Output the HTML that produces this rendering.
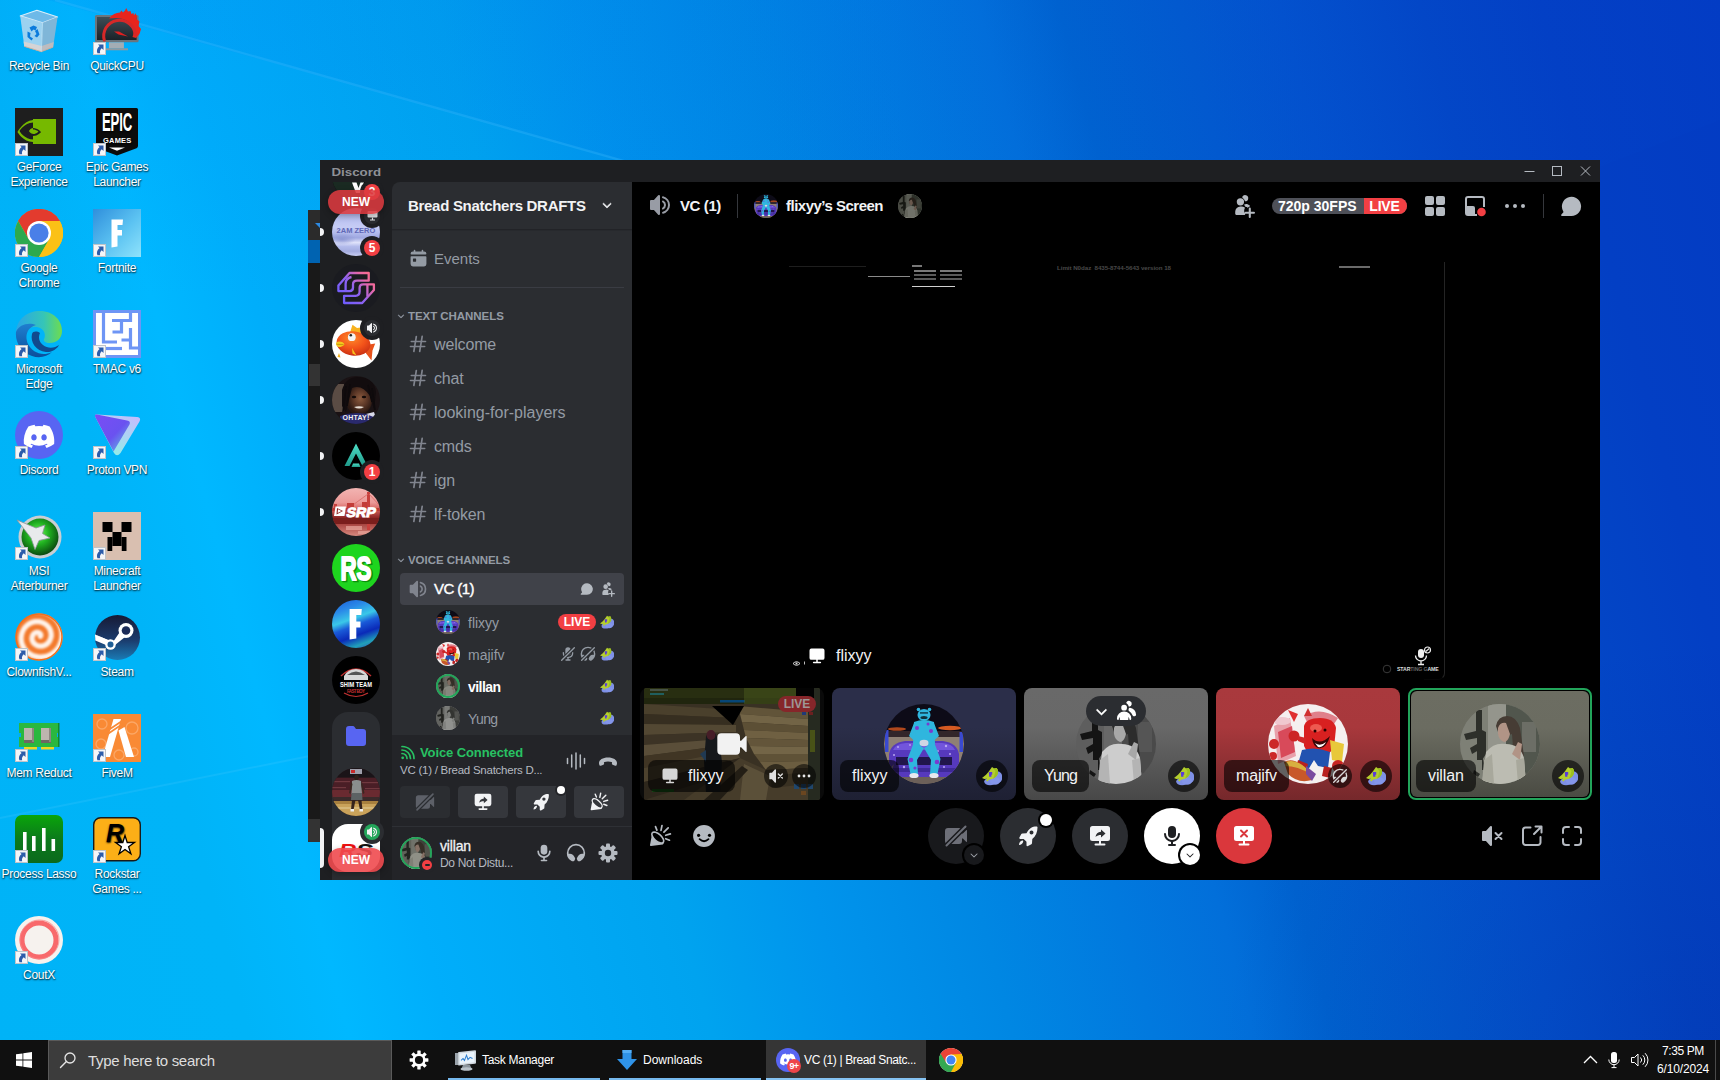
<!DOCTYPE html>
<html>
<head>
<meta charset="utf-8">
<title>Desktop</title>
<style>
*{box-sizing:border-box;margin:0;padding:0}
html,body{width:1720px;height:1080px;overflow:hidden}
body{position:relative;font-family:"Liberation Sans",sans-serif;background:#0078d7;color:#fff}
.abs{position:absolute}
#wall{position:absolute;left:0;top:0;width:1720px;height:1080px;
background:
radial-gradient(ellipse 500px 400px at 1720px 1040px,rgba(2,30,140,.22),rgba(2,30,140,0) 100%),
linear-gradient(75deg,#00b3f7 0%,#00b4f8 13%,#00b8ff 18%,#00aefb 23%,#00a8f4 30%,#00a3ef 36%,#0094ec 43%,#0087e3 51%,#0179de 58%,#026fda 63%,#0062cf 67%,#0259ce 73%,#0351cd 78%,#0346c6 85%,#033fc4 91%,#033bc3 100%);}
#wall .w1{position:absolute;left:0;top:0;width:1720px;height:1080px;background:linear-gradient(100deg,rgba(0,90,230,.09),rgba(0,90,230,.03) 70%);clip-path:polygon(48px 0,1720px 0,1720px 120px,1200px 322px)}
#wall .w2{position:absolute;left:0;top:0;width:900px;height:300px;background:linear-gradient(to bottom,rgba(0,120,235,.10),rgba(0,120,235,0))}
/* desktop icons */
.di{position:absolute;width:78px;text-align:center;font-size:12px;line-height:15px;color:#fff;text-shadow:0 1px 2px rgba(0,0,0,.7),1px 1px 1px rgba(0,0,0,.35);letter-spacing:-.3px}
.di .ic{position:relative;width:48px;height:48px;margin:0 auto 4px auto}
.di .ic svg{position:absolute;left:0;top:0}
.sc{position:absolute;left:0;bottom:0;width:12px;height:12px;background:#f4f6f8;border:1px solid #c8ccd0}
/* taskbar */
#tb{position:absolute;left:0;top:1040px;width:1720px;height:40px;background:#101010}
#tb .search{position:absolute;left:48px;top:0;width:344px;height:40px;background:#3c3c3c;border:1px solid #5a5a5a;border-bottom:none}
#tb .t{position:absolute;top:0;height:40px;font-size:12px;line-height:38px;color:#fff;white-space:nowrap}
#tb .ul{position:absolute;bottom:0;height:2px;background:#76b9ed}
/* discord */
#dw{position:absolute;left:320px;top:160px;width:1280px;height:720px;background:#1e1f22;overflow:hidden}
.sv{width:48px;height:48px}
.newp{width:56px;height:24px;border-radius:12px;font-size:12px;font-weight:bold;line-height:24px;text-align:center;color:#fff;box-shadow:0 2px 6px rgba(0,0,0,.3)}
#side{position:absolute;left:72px;top:22px;width:240px;height:698px;background:#2b2d31;border-top-left-radius:8px;overflow:hidden}
#main{position:absolute;left:312px;top:22px;width:968px;height:698px;background:#000}
</style>
</head>
<body>
<div id="wall"><div class="w2"></div><div class="w1"></div><svg class="abs" style="left:0;top:0" width="1720" height="1080"><path d="M55 0 1200 324" stroke="#48c0ff" stroke-opacity=".26" stroke-width="2.400" fill="none"/><path d="M0 818 330 752" stroke="#6fd8ff" stroke-opacity=".14" stroke-width="2" fill="none"/></svg></div>
<!--BEHIND-->
<div class="abs" style="left:308px;top:210px;width:14px;height:632px;background:#191919"></div>
<div class="abs" style="left:308px;top:210px;width:14px;height:30px;background:#2b2b2b"></div>
<div class="abs" style="left:308px;top:240px;width:14px;height:23px;background:#0063b1"></div>
<div class="abs" style="left:309px;top:364px;width:13px;height:22px;background:#333"></div>
<div class="abs" style="left:308px;top:819px;width:14px;height:23px;background:#333"></div>
<svg class="abs" style="left:315px;top:223px" width="6" height="6"><path d="M0 0H5V5z" fill="#2d89e0"/></svg>
<!--/BEHIND-->
<!--ICONS-->
<div class="di" style="left:0px;top:7px"><div class="ic"><svg width="48" height="48" viewBox="0 0 48 48"><path d="M5.200 8.900 21.900 3.200 42.600 10.100 27.600 15.800z" fill="#6db9e8" stroke="#d9eefa" stroke-width="1.100" stroke-linejoin="round"/>
<path d="M5.200 8.900 27.600 15.800 26.300 44.700 9.300 39.400z" fill="#a8d4ef" opacity=".93"/><path d="M27.600 15.800 42.600 10.100 38.100 40.200 26.300 44.700z" fill="#86b6d6" opacity=".95"/>
<path d="M8.600 34.500 26.600 39 26.300 44.700 9.300 39.400z" fill="#d4d4d6"/><path d="M26.600 39 38.800 35 38.100 40.200 26.300 44.700z" fill="#bcbcc0"/>
<path d="M9.300 39.400 26.300 44.700 38.100 40.200" fill="none" stroke="#c9a890" stroke-width=".8"/><path d="M27.600 15.800 26.300 44.700" stroke="#cfe6f5" stroke-width=".7"/>
<g fill="#0b7bdc"><path d="M14.500 20.500 18.500 18.500 22 20 20.500 23.500 18.500 22.500 16.500 24.500z"/><path d="M22.500 22 24.500 27.500 22 30.500 19.500 29 21.500 27 20 24z"/><path d="M12.500 24.500 15.500 26 15 29.500 18 31.500 16.500 33.500 12.500 30z"/></g></svg></div>Recycle Bin</div>
<div class="di" style="left:78px;top:7px"><div class="ic"><svg width="48" height="48" viewBox="0 0 48 48"><defs><linearGradient id="qm" x1="0" y1="0" x2="0" y2="1"><stop offset="0" stop-color="#3f4d56"/><stop offset="1" stop-color="#1a2228"/></linearGradient></defs>
<rect x="2" y="8" width="43.600" height="27.300" rx="1.500" fill="#6a757d"/><rect x="4" y="10" width="39.600" height="23" fill="url(#qm)"/><rect x="15.900" y="35.300" width="15" height="6.200" fill="#a3adb4"/><rect x="13" y="41.300" width="22" height="2" fill="#8f999f"/>
<path d="M16 11.500C19 7.500 23 5.500 27 5.500L28.500 3.500 30 5.500 32 3.500 33.200 1 35 4.500 37.500 4 38.500 7 40.500 6 41 8.500 42.500 6.200 44 9.500 43.500 12 46.500 14.500 45.500 19 48 22 46.500 27 43 31 39.500 30C43 22 38 14.500 30 12 25 10.500 20 11 16 11.500z" fill="#e8251d"/>
<path d="M11.500 34A15.800 15.800 0 1 1 42.300 29" fill="none" stroke="#d62828" stroke-width="3"/><path d="M11 27.500a16 16 0 0 0 .800 7" stroke="#d62828" stroke-width="1.200" fill="none"/>
<path d="M21 24.500 26 24.500 35 29.500 25.500 27.500z" fill="#e02020"/></svg><svg style="left:0;top:35px" width="13" height="13" viewBox="0 0 13 13"><rect x=".5" y=".5" width="12" height="12" fill="#f5f6f8" stroke="#c0c4c9"/><path d="M5 2.500H10.500V8L8.700 6.200C7 7.800 6.600 9.300 7.200 11.200H4.400C3.300 8.600 4.200 6 6.600 4.100z" fill="#2c5caa"/></svg></div>QuickCPU</div>
<div class="di" style="left:0px;top:108px"><div class="ic"><svg width="48" height="48" viewBox="0 0 48 48"><rect width="48" height="48" fill="#1e1e1e"/><rect x="18" y="11" width="23" height="25" fill="#76b900"/>
<path d="M18 14.500C9 15 4.500 23 4.500 23S9 31.500 19 31.500 32 25.500 36 23.500C32 27 28 34 18 34 8 34 2.500 24 2.500 24S8 13 18 12z" fill="#76b900"/>
<path d="M18 17.500C13 18 10 23 10 23s3 5 8 5c5 0 8-4 8-4s-3-4-8-4v-2.500z" fill="#1e1e1e"/><path d="M18 20c-2.500.300-4 3-4 3s1.500 3 4.500 3 5-2.500 5-2.500S21 21.500 18 21.500z" fill="#76b900"/><path d="M18 11v25" stroke="#1e1e1e" stroke-width="0"/></svg><svg style="left:0;top:35px" width="13" height="13" viewBox="0 0 13 13"><rect x=".5" y=".5" width="12" height="12" fill="#f5f6f8" stroke="#c0c4c9"/><path d="M5 2.500H10.500V8L8.700 6.200C7 7.800 6.600 9.300 7.200 11.200H4.400C3.300 8.600 4.200 6 6.600 4.100z" fill="#2c5caa"/></svg></div>GeForce<br>Experience</div>
<div class="di" style="left:78px;top:108px"><div class="ic"><svg width="48" height="48" viewBox="0 0 48 48"><path d="M3 1.500Q3 0 4.500 0H43.500Q45 0 45 1.500V38Q45 39.500 43.500 40.200L24 47.500 4.500 40.200Q3 39.500 3 38z" fill="#0b0b0b"/>
<text x="24" y="24" font-family="Liberation Sans" font-weight="bold" font-size="21" fill="#fff" text-anchor="middle" textLength="30" lengthAdjust="spacingAndGlyphs" transform="translate(24 24) scale(1 1.250) translate(-24 -24.500)">EPIC</text>
<text x="24" y="35" font-family="Liberation Sans" font-weight="bold" font-size="7.500" fill="#fff" text-anchor="middle" textLength="28">GAMES</text><path d="M16 39.500h16l-8 3.300z" fill="#fff"/></svg><svg style="left:0;top:35px" width="13" height="13" viewBox="0 0 13 13"><rect x=".5" y=".5" width="12" height="12" fill="#f5f6f8" stroke="#c0c4c9"/><path d="M5 2.500H10.500V8L8.700 6.200C7 7.800 6.600 9.300 7.200 11.200H4.400C3.300 8.600 4.200 6 6.600 4.100z" fill="#2c5caa"/></svg></div>Epic Games<br>Launcher</div>
<div class="di" style="left:0px;top:209px"><div class="ic"><svg width="48" height="48" viewBox="0 0 48 48"><circle cx="24" cy="24" r="24" fill="#fbc116"/>
<path d="M24 24 3.200 12A24 24 0 0 1 44.800 12z" fill="#e33b2e"/><path d="M24 12H44.800A24 24 0 0 0 3.200 12L13.600 30z" fill="#e33b2e"/>
<path d="M13.600 30 3.200 12A24 24 0 0 0 24 48L34.400 30z" fill="#2da94f"/>
<path d="M34.400 30 24 48A24 24 0 0 0 44.800 12H24z" fill="#fbc116"/>
<circle cx="24" cy="24" r="12" fill="#fff"/><circle cx="24" cy="24" r="9.600" fill="#4a7fe8"/></svg><svg style="left:0;top:35px" width="13" height="13" viewBox="0 0 13 13"><rect x=".5" y=".5" width="12" height="12" fill="#f5f6f8" stroke="#c0c4c9"/><path d="M5 2.500H10.500V8L8.700 6.200C7 7.800 6.600 9.300 7.200 11.200H4.400C3.300 8.600 4.200 6 6.600 4.100z" fill="#2c5caa"/></svg></div>Google<br>Chrome</div>
<div class="di" style="left:78px;top:209px"><div class="ic"><svg width="48" height="48" viewBox="0 0 48 48"><defs><linearGradient id="fn" x1="0" y1="0" x2="1" y2="1"><stop offset="0" stop-color="#2f8fdc"/><stop offset=".55" stop-color="#5cc3f2"/><stop offset="1" stop-color="#8fe3fb"/></linearGradient></defs><rect width="48" height="48" fill="url(#fn)"/><path d="M18.500 10.500H30L29.500 16H24.500V21H29V26.500H24.500V37.500L18.500 38.500z" fill="#fff"/></svg><svg style="left:0;top:35px" width="13" height="13" viewBox="0 0 13 13"><rect x=".5" y=".5" width="12" height="12" fill="#f5f6f8" stroke="#c0c4c9"/><path d="M5 2.500H10.500V8L8.700 6.200C7 7.800 6.600 9.300 7.200 11.200H4.400C3.300 8.600 4.200 6 6.600 4.100z" fill="#2c5caa"/></svg></div>Fortnite</div>
<div class="di" style="left:0px;top:310px"><div class="ic"><svg width="48" height="48" viewBox="0 0 48 48"><defs><linearGradient id="e1" x1="0" y1="0" x2="1" y2="0"><stop offset="0" stop-color="#2aa5e8"/><stop offset=".6" stop-color="#35c5b8"/><stop offset="1" stop-color="#6fdc4e"/></linearGradient><linearGradient id="e2" x1="0" y1="0" x2="0" y2="1"><stop offset="0" stop-color="#1f7fd0"/><stop offset="1" stop-color="#0c4f9c"/></linearGradient></defs>
<path d="M1 22C2 9 12 1 25 1 38 1 47 10 47 21 47 29 41 33 35 33 30 33 28 31 29 29 31 26 30 18 22 17 12 16 4 22 1 22z" fill="url(#e1)"/>
<path d="M1 22C4 14 14 12 21 15 13 17 9 25 13 34 17 42 27 47 37 42 32 47 24 48.500 17 46 6 42 0 32 1 22z" fill="url(#e2)"/>
<path d="M17 24C15 32 21 41 31 42 37 42.500 42 39 44 35 40 38 33 39 28 35 24 32 23 27 25 23 22 21 18 21 17 24z" fill="#114a8e"/></svg><svg style="left:0;top:35px" width="13" height="13" viewBox="0 0 13 13"><rect x=".5" y=".5" width="12" height="12" fill="#f5f6f8" stroke="#c0c4c9"/><path d="M5 2.500H10.500V8L8.700 6.200C7 7.800 6.600 9.300 7.200 11.200H4.400C3.300 8.600 4.200 6 6.600 4.100z" fill="#2c5caa"/></svg></div>Microsoft<br>Edge</div>
<div class="di" style="left:78px;top:310px"><div class="ic"><svg width="48" height="48" viewBox="0 0 48 48"><rect width="48" height="48" fill="#6e95f5"/><rect x="3" y="3" width="42" height="42" fill="#fff"/>
<g fill="none" stroke="#6e95f5" stroke-width="3.200"><path d="M10.500 3V32H24"/><path d="M19 10.500H37.500V3M28.500 10.500V22H19.500"/><path d="M37.500 18V38H45M28.500 30H37"/><path d="M3 38.500H29"/></g></svg><svg style="left:0;top:35px" width="13" height="13" viewBox="0 0 13 13"><rect x=".5" y=".5" width="12" height="12" fill="#f5f6f8" stroke="#c0c4c9"/><path d="M5 2.500H10.500V8L8.700 6.200C7 7.800 6.600 9.300 7.200 11.200H4.400C3.300 8.600 4.200 6 6.600 4.100z" fill="#2c5caa"/></svg></div>TMAC v6</div>
<div class="di" style="left:0px;top:411px"><div class="ic"><svg width="48" height="48" viewBox="0 0 48 48"><circle cx="24" cy="24" r="24" fill="#5865f2"/><g transform="translate(8.500 12.500) scale(1.940)"><path fill="#fff" d="M13.500 1.600A12 12 0 0 0 10.300.6l-.4.8a11 11 0 0 0-3.800 0L5.700.6a12 12 0 0 0-3.200 1C.5 4.700-.1 7.700.2 10.600a12 12 0 0 0 3.900 2l.8-1.300a8 8 0 0 1-1.300-.6l.3-.3a8.800 8.800 0 0 0 8.200 0l.3.300c-.4.200-.8.500-1.300.6l.8 1.300a12 12 0 0 0 3.900-2c.4-3.400-.6-6.300-2.300-9zM5.400 8.800c-.8 0-1.400-.7-1.400-1.600s.6-1.600 1.400-1.600 1.400.7 1.400 1.600-.6 1.600-1.400 1.600zm5.200 0c-.8 0-1.400-.7-1.400-1.600s.6-1.600 1.400-1.600 1.400.7 1.400 1.600-.6 1.600-1.400 1.600z"/></g></svg><svg style="left:0;top:35px" width="13" height="13" viewBox="0 0 13 13"><rect x=".5" y=".5" width="12" height="12" fill="#f5f6f8" stroke="#c0c4c9"/><path d="M5 2.500H10.500V8L8.700 6.200C7 7.800 6.600 9.300 7.200 11.200H4.400C3.300 8.600 4.200 6 6.600 4.100z" fill="#2c5caa"/></svg></div>Discord</div>
<div class="di" style="left:78px;top:411px"><div class="ic"><svg width="48" height="48" viewBox="0 0 48 48"><defs><linearGradient id="pv" x1="0" y1="0" x2="1" y2="1"><stop offset="0" stop-color="#7a4df5"/><stop offset=".55" stop-color="#6a52f0"/><stop offset="1" stop-color="#5fd0e0"/></linearGradient><linearGradient id="pv2" x1="1" y1="0" x2=".3" y2="1"><stop offset="0" stop-color="#c9b8ff"/><stop offset="1" stop-color="#8ff0e6"/></linearGradient></defs>
<path d="M4 3.500Q1 3 2.500 6.500L21 42Q24 46.500 27.500 42L46.500 10.500Q48.500 6.500 44 6z" fill="url(#pv2)"/><path d="M4 3.500Q1 3 2.500 6.500L20.500 40.500 36.500 13.500Q38 10 34 9.500z" fill="url(#pv)"/></svg><svg style="left:0;top:35px" width="13" height="13" viewBox="0 0 13 13"><rect x=".5" y=".5" width="12" height="12" fill="#f5f6f8" stroke="#c0c4c9"/><path d="M5 2.500H10.500V8L8.700 6.200C7 7.800 6.600 9.300 7.200 11.200H4.400C3.300 8.600 4.200 6 6.600 4.100z" fill="#2c5caa"/></svg></div>Proton VPN</div>
<div class="di" style="left:0px;top:512px"><div class="ic"><svg width="48" height="48" viewBox="0 0 48 48"><defs><radialGradient id="ms" cx=".45" cy=".4" r=".6"><stop offset="0" stop-color="#6cff5a"/><stop offset=".5" stop-color="#1fae1f"/><stop offset="1" stop-color="#0b4a10"/></radialGradient></defs>
<circle cx="25" cy="25" r="21.500" fill="#c9ced2"/><circle cx="25" cy="25" r="18.500" fill="url(#ms)"/><path d="M2 8 21 16 30 13 27.500 21.500 35 26 24 28.500 20 37.500 16 26z" fill="#e8eaec" stroke="#8d9499" stroke-width=".8"/></svg><svg style="left:0;top:35px" width="13" height="13" viewBox="0 0 13 13"><rect x=".5" y=".5" width="12" height="12" fill="#f5f6f8" stroke="#c0c4c9"/><path d="M5 2.500H10.500V8L8.700 6.200C7 7.800 6.600 9.300 7.200 11.200H4.400C3.300 8.600 4.200 6 6.600 4.100z" fill="#2c5caa"/></svg></div>MSI<br>Afterburner</div>
<div class="di" style="left:78px;top:512px"><div class="ic"><svg width="48" height="48" viewBox="0 0 48 48"><rect width="48" height="48" fill="#d9bfb0"/><g fill="#000"><rect x="9.500" y="10" width="10" height="10"/><rect x="28.500" y="10" width="10" height="10"/><rect x="19.500" y="20" width="9" height="14"/><rect x="14.500" y="25" width="5" height="14"/><rect x="28.500" y="25" width="5" height="14"/></g><rect x="19.500" y="34" width="9" height="5" fill="#d9bfb0"/></svg><svg style="left:0;top:35px" width="13" height="13" viewBox="0 0 13 13"><rect x=".5" y=".5" width="12" height="12" fill="#f5f6f8" stroke="#c0c4c9"/><path d="M5 2.500H10.500V8L8.700 6.200C7 7.800 6.600 9.300 7.200 11.200H4.400C3.300 8.600 4.200 6 6.600 4.100z" fill="#2c5caa"/></svg></div>Minecraft<br>Launcher</div>
<div class="di" style="left:0px;top:613px"><div class="ic"><svg width="48" height="48" viewBox="0 0 48 48"><defs><filter id="cfb" x="-10%" y="-10%" width="120%" height="120%"><feGaussianBlur stdDeviation="1.1"/></filter><clipPath id="cfc"><circle cx="24" cy="24" r="23.500"/></clipPath></defs><circle cx="24" cy="24" r="23.500" fill="#f37a2d"/><g clip-path="url(#cfc)"><path d="M25.4 23.3 L25.6 23.0 L25.7 22.7 L25.8 22.3 L25.7 21.8 L25.6 21.4 L25.4 20.9 L25.0 20.5 L24.6 20.1 L24.1 19.7 L23.5 19.5 L22.8 19.4 L22.1 19.3 L21.3 19.4 L20.6 19.7 L19.8 20.0 L19.1 20.5 L18.4 21.2 L17.9 22.0 L17.5 22.8 L17.2 23.8 L17.0 24.9 L17.0 26.0 L17.2 27.1 L17.6 28.2 L18.2 29.3 L18.9 30.3 L19.9 31.2 L21.0 31.9 L22.2 32.6 L23.5 33.0 L25.0 33.2 L26.5 33.2 L28.0 32.9 L29.5 32.4 L30.9 31.7 L32.2 30.7 L33.4 29.5 L34.4 28.2 L35.2 26.6 L35.8 24.9 L36.2 23.1 L36.2 21.2 L35.9 19.3 L35.4 17.4 L34.6 15.6 L33.4 13.9 L32.0 12.4 L30.4 11.1 L28.5 10.0 L26.5 9.2 L24.3 8.7 L22.1 8.6 L19.8 8.7 L17.5 9.3 L15.3 10.2 L13.2 11.4 L11.3 13.0 L9.6 14.9 L8.3 17.0 L7.2 19.3 L6.5 21.8 L6.1 24.5 L6.2 27.2 L6.7 29.9 L7.6 32.5 L8.9 35.0 L10.6 37.3 L12.6 39.3 L15.0 41.1 L17.6 42.5 L20.5 43.4 L23.5 44.0 L26.6 44.1 L29.7 43.7 L32.7 42.9 L35.6 41.6 L38.4 39.8 L40.8 37.6 L43.0 35.1 L44.7 32.2 L46.0 29.1 L46.8 25.7 L47.1 22.2 L46.9 18.7 L46.2 15.3 L44.9 11.9 L43.2 8.7 L40.9 5.8 L38.2 3.3 L35.1 1.1 L31.7 -0.6 L28.1 -1.7 L24.2 -2.3 L20.3 -2.3" fill="none" stroke="#fff3ea" stroke-width="5.200" stroke-linecap="round" filter="url(#cfb)"/></g><circle cx="24" cy="24" r="23" fill="none" stroke="#f0701f" stroke-width="1.500"/></svg><svg style="left:0;top:35px" width="13" height="13" viewBox="0 0 13 13"><rect x=".5" y=".5" width="12" height="12" fill="#f5f6f8" stroke="#c0c4c9"/><path d="M5 2.500H10.500V8L8.700 6.200C7 7.800 6.600 9.300 7.200 11.200H4.400C3.300 8.600 4.200 6 6.600 4.100z" fill="#2c5caa"/></svg></div>ClownfishV...</div>
<div class="di" style="left:78px;top:613px"><div class="ic"><svg width="48" height="48" viewBox="0 0 48 48"><defs><linearGradient id="st" x1="0" y1="0" x2="0" y2="1"><stop offset="0" stop-color="#171a35"/><stop offset=".55" stop-color="#1b3a6b"/><stop offset="1" stop-color="#1a7bb5"/></linearGradient></defs><circle cx="24.500" cy="24.500" r="22.500" fill="url(#st)"/>
<circle cx="33" cy="17.500" r="7.500" fill="#fff"/><circle cx="33" cy="17.500" r="4.300" fill="#1b2b58"/><path d="M2 21.500 20 29 26.500 19.500 32 24 22 32z" fill="#fff"/><circle cx="17.500" cy="31.500" r="5.300" fill="#fff"/><circle cx="17.500" cy="31.500" r="3" fill="#1d5e96"/><path d="M2 21.500 15 27 13 32 2.300 27.500z" fill="#fff"/></svg><svg style="left:0;top:35px" width="13" height="13" viewBox="0 0 13 13"><rect x=".5" y=".5" width="12" height="12" fill="#f5f6f8" stroke="#c0c4c9"/><path d="M5 2.500H10.500V8L8.700 6.200C7 7.800 6.600 9.300 7.200 11.200H4.400C3.300 8.600 4.200 6 6.600 4.100z" fill="#2c5caa"/></svg></div>Steam</div>
<div class="di" style="left:0px;top:714px"><div class="ic"><svg width="48" height="48" viewBox="0 0 48 48"><rect x="4" y="9" width="40" height="24" fill="#2ab83f"/><rect x="4" y="19" width="2" height="4" fill="#00adef"/><rect x="42" y="19" width="2" height="4" fill="#00adef"/><rect x="43" y="9" width="1.500" height="24" fill="#148a2b"/>
<rect x="9" y="14" width="10" height="14" fill="#bdb5ae"/><rect x="26" y="14" width="10" height="14" fill="#bdb5ae"/><rect x="9" y="26" width="10" height="3" fill="#6e6862"/><rect x="26" y="26" width="10" height="3" fill="#6e6862"/><rect x="17" y="14" width="2" height="14" fill="#8d867f"/><rect x="34" y="14" width="2" height="14" fill="#8d867f"/>
<rect x="9" y="33" width="13" height="2.500" fill="#f0d820"/><rect x="26" y="33" width="13" height="2.500" fill="#f0d820"/></svg><svg style="left:0;top:35px" width="13" height="13" viewBox="0 0 13 13"><rect x=".5" y=".5" width="12" height="12" fill="#f5f6f8" stroke="#c0c4c9"/><path d="M5 2.500H10.500V8L8.700 6.200C7 7.800 6.600 9.300 7.200 11.200H4.400C3.300 8.600 4.200 6 6.600 4.100z" fill="#2c5caa"/></svg></div>Mem Reduct</div>
<div class="di" style="left:78px;top:714px"><div class="ic"><svg width="48" height="48" viewBox="0 0 48 48"><rect width="48" height="48" fill="#f98a35"/><g fill="none" stroke="#fba766" stroke-width="1.300"><circle cx="9" cy="10" r="5"/><circle cx="39" cy="14" r="6"/><circle cx="8" cy="30" r="5"/><circle cx="26" cy="41" r="5"/><circle cx="41" cy="38" r="4"/></g>
<path d="M20.500 5H28L17 43H9.500z" fill="#fff"/><path d="M25.500 16.500 31.500 13 41 43H33z" fill="#fff"/><path d="M15.500 16 29 7M14 20.500 29.500 10" stroke="#f98a35" stroke-width="1.600"/></svg><svg style="left:0;top:35px" width="13" height="13" viewBox="0 0 13 13"><rect x=".5" y=".5" width="12" height="12" fill="#f5f6f8" stroke="#c0c4c9"/><path d="M5 2.500H10.500V8L8.700 6.200C7 7.800 6.600 9.300 7.200 11.200H4.400C3.300 8.600 4.200 6 6.600 4.100z" fill="#2c5caa"/></svg></div>FiveM</div>
<div class="di" style="left:0px;top:815px"><div class="ic"><svg width="48" height="48" viewBox="0 0 48 48"><defs><linearGradient id="pl" x1="0" y1="0" x2="0" y2="1"><stop offset="0" stop-color="#0aa50a"/><stop offset=".5" stop-color="#0c7a1c"/><stop offset="1" stop-color="#0b6a1c"/></linearGradient></defs><rect width="48" height="48" rx="7" fill="url(#pl)"/><g fill="#fff"><rect x="8" y="17" width="3.600" height="19"/><rect x="17" y="21" width="3.600" height="15"/><rect x="27" y="13" width="3.600" height="23"/><rect x="36.500" y="24" width="3.600" height="12"/></g></svg><svg style="left:0;top:35px" width="13" height="13" viewBox="0 0 13 13"><rect x=".5" y=".5" width="12" height="12" fill="#f5f6f8" stroke="#c0c4c9"/><path d="M5 2.500H10.500V8L8.700 6.200C7 7.800 6.600 9.300 7.200 11.200H4.400C3.300 8.600 4.200 6 6.600 4.100z" fill="#2c5caa"/></svg></div>Process Lasso</div>
<div class="di" style="left:78px;top:815px"><div class="ic"><svg width="48" height="48" viewBox="0 0 48 48"><rect x=".7" y="2.700" width="46.600" height="43" rx="7" fill="#fcaf17" stroke="#1a1a1a" stroke-width="1.400"/><text x="13" y="27" font-family="Liberation Sans" font-weight="bold" font-style="italic" font-size="25" fill="#000">R</text>
<path d="M32 20.500 34.200 27.500 41.500 27.500 35.600 31.800 37.900 38.800 32 34.500 26.100 38.800 28.400 31.800 22.500 27.500 29.800 27.500z" fill="#fff" stroke="#000" stroke-width="1.300"/></svg><svg style="left:0;top:35px" width="13" height="13" viewBox="0 0 13 13"><rect x=".5" y=".5" width="12" height="12" fill="#f5f6f8" stroke="#c0c4c9"/><path d="M5 2.500H10.500V8L8.700 6.200C7 7.800 6.600 9.300 7.200 11.200H4.400C3.300 8.600 4.200 6 6.600 4.100z" fill="#2c5caa"/></svg></div>Rockstar<br>Games ...</div>
<div class="di" style="left:0px;top:916px"><div class="ic"><svg width="48" height="48" viewBox="0 0 48 48"><circle cx="24" cy="24" r="24" fill="#f6f2ee"/><circle cx="24" cy="24" r="17" fill="none" stroke="#f8696b" stroke-width="5"/><circle cx="24.500" cy="23.500" r="19.500" fill="none" stroke="#f8898a" stroke-width=".8"/></svg><svg style="left:0;top:35px" width="13" height="13" viewBox="0 0 13 13"><rect x=".5" y=".5" width="12" height="12" fill="#f5f6f8" stroke="#c0c4c9"/><path d="M5 2.500H10.500V8L8.700 6.200C7 7.800 6.600 9.300 7.200 11.200H4.400C3.300 8.600 4.200 6 6.600 4.100z" fill="#2c5caa"/></svg></div>CoutX</div>
<!--/ICONS-->
<div id="dw">
<!--TITLE-->
<div class="abs" style="left:12px;top:552px;width:48px;height:200px;border-radius:16px;background:#2b2d31"></div>
<div class="abs sv" style="left:12px;top:-8px;border-radius:50%;background:#0d0f0e;overflow:hidden"><svg width="48" height="48" viewBox="0 0 48 48"><path d="M0 30 30 30 48 46 0 48z" fill="#1a2a22"/><path d="M20 30.500H24.500L26.500 36 28.500 30.500H32L28 41H24z" fill="#fff"/></svg></div>
<div class="abs" style="left:40px;top:20px;width:24px;height:24px;border-radius:50%;background:#1e1f22"></div><div class="abs" style="left:44px;top:24px;width:16px;height:16px;border-radius:50%;background:#f23f43;font-size:12px;font-weight:bold;line-height:16px;text-align:center">3</div>
<div class="abs sv" style="left:12px;top:48px;border-radius:50%;"><div style="position:absolute;inset:0;border-radius:50%;background:radial-gradient(ellipse 14px 6px at 10px 31px,#8e98d4 0,rgba(142,152,212,0) 100%),linear-gradient(180deg,#aeb6ee 0%,#bcc3f2 25%,#c6ccf5 40%,#b2baec 52%,#9fa8e0 62%,#dfe2fa 72%,#b4bcec 80%,#a4acdf 90%,#c9cef3 100%)"></div><div style="position:absolute;left:0;top:18px;width:48px;text-align:center;font-size:7.500px;font-weight:bold;color:#6068b6;letter-spacing:0;white-space:nowrap;line-height:10px">2AM ZERO</div></div>
<div class="abs" style="left:40px;top:44px;width:24px;height:24px;border-radius:50%;background:#1e1f22"></div><div class="abs" style="left:44px;top:48px;width:16px;height:16px;border-radius:50%;background:#2b2d31"></div><svg class="abs" style="left:46.500px;top:51px" width="11" height="10" viewBox="0 0 11 10"><rect x=".5" y="0" width="10" height="6.500" rx="1" fill="#e3e5e8"/><path d="M5.500 6.500v2M3 9h5" stroke="#e3e5e8" stroke-width="1.200"/></svg>
<div class="abs" style="left:40px;top:76px;width:24px;height:24px;border-radius:50%;background:#1e1f22"></div><div class="abs" style="left:44px;top:80px;width:16px;height:16px;border-radius:50%;background:#f23f43;font-size:12px;font-weight:bold;line-height:16px;text-align:center">5</div>
<div class="abs" style="left:-4px;top:68px;width:8px;height:8px;border-radius:4px;background:#f2f3f5"></div>
<div class="abs sv" style="left:12px;top:104px;border-radius:50%;background:#1a1b20"><svg width="48" height="48" viewBox="0 0 48 48"><defs><linearGradient id="sg" gradientUnits="userSpaceOnUse" x1="8" y1="38" x2="42" y2="10"><stop offset="0" stop-color="#6a5cff"/><stop offset=".45" stop-color="#8f62f0"/><stop offset=".75" stop-color="#e868a8"/><stop offset="1" stop-color="#ff6e84"/></linearGradient></defs><g fill="none" stroke="url(#sg)" stroke-width="2.300" stroke-linejoin="round"><path d="M17.500 9H36.700V16.700H25Q21 16.700 21 20.500V23.500Q21 27.100 17.500 27.100H6.400V21.500z"/><path d="M13.600 27V20Q13.600 14 19.500 13"/><path d="M41.900 20.400H31Q27.600 20.400 27.600 24V27.500Q27.600 31.800 23.500 31.800H12.100V39H30.200L41.900 26z"/><path d="M35.400 20.400V32.500"/></g></svg></div>
<div class="abs" style="left:-4px;top:124px;width:8px;height:8px;border-radius:4px;background:#f2f3f5"></div>
<div class="abs sv" style="left:12px;top:160px;border-radius:50%;background:#fff;overflow:hidden"><svg width="48" height="48" viewBox="0 0 48 48"><defs><radialGradient id="fg" cx=".42" cy=".3" r=".75"><stop offset="0" stop-color="#ff8a2a"/><stop offset=".55" stop-color="#f2521a"/><stop offset="1" stop-color="#c42c12"/></radialGradient></defs><path d="M18 12.500 20.500 4.700 25 8 28.500 7.500 29.500 14.500z" fill="#f7b21e"/><path d="M34 25 43.200 23.500 40.500 30.500 39.500 40.500 33 32z" fill="#e8531c"/><ellipse cx="21.500" cy="23.500" rx="17" ry="12.200" transform="rotate(8 21.500 23.500)" fill="url(#fg)"/><path d="M7 33 8.500 37.500 5.500 37z" fill="#f2b01e"/><path d="M20 28 24.500 35.500 20.500 33.500z" fill="#f7c21e"/><path d="M4 24Q3.800 21.500 7 21.500 11.500 21.800 12.500 24.200 11 27 6.500 27 4.200 26.500 4 24z" fill="#f2c81e"/><path d="M4.500 24.300 11.500 24.600" stroke="#a8780a" stroke-width=".6"/><circle cx="19.800" cy="17.200" r="3.900" fill="#f4f4f4"/><circle cx="18.800" cy="15.200" r="1.300" fill="#222"/></svg></div>
<div class="abs" style="left:40px;top:156px;width:24px;height:24px;border-radius:50%;background:#1e1f22"></div><div class="abs" style="left:44px;top:160px;width:16px;height:16px;border-radius:50%;background:#2b2d31"></div><svg class="abs" style="left:46px;top:162px" width="12" height="12" viewBox="0 0 24 24"><path fill="#f2f3f5" d="M12 3a1 1 0 0 0-1-1h-.06a1 1 0 0 0-.74.320L5.920 7H3a1 1 0 0 0-1 1v8a1 1 0 0 0 1 1h2.920l4.280 4.680a1 1 0 0 0 .74.320H11a1 1 0 0 0 1-1V3ZM15.100 20.750c-.58.140-1.100-.330-1.100-.920v-.030c0-.500.370-.920.850-1.050a7 7 0 0 0 0-13.500A1.110 1.110 0 0 1 14 4.200v-.030c0-.600.520-1.060 1.100-.920a9 9 0 0 1 0 17.500Z"/><path fill="#f2f3f5" d="M15.160 16.510c-.570.280-1.160-.200-1.160-.830v-.140c0-.430.280-.800.630-1.020a3 3 0 0 0 0-5.040c-.350-.230-.630-.600-.630-1.020v-.140c0-.630.590-1.100 1.160-.830a5 5 0 0 1 0 9.020Z"/></svg>
<div class="abs" style="left:-4px;top:180px;width:8px;height:8px;border-radius:4px;background:#f2f3f5"></div>
<div class="abs sv" style="left:12px;top:216px;border-radius:50%;overflow:hidden"><svg width="48" height="48" viewBox="0 0 48 48"><defs><radialGradient id="oh" cx=".55" cy=".45" r=".5"><stop offset="0" stop-color="#8a5a3e"/><stop offset=".55" stop-color="#5a3626"/><stop offset="1" stop-color="#2a1812"/></radialGradient></defs><rect width="48" height="48" fill="#1a1214"/><rect x="0" y="8" width="12" height="28" fill="#5a4c44"/><ellipse cx="27" cy="24" rx="13" ry="15" fill="url(#oh)"/><path d="M10 14Q14 0 28 1T44 16L42 34 38 20Q30 8 20 12L14 36 10 30z" fill="#120c0e"/><g stroke="#0e0a0c" stroke-width="1.600" fill="none"><path d="M14 10 11 36M18 8 15 30M40 12 43 34M36 9 40 26"/></g><ellipse cx="22" cy="21" rx="2.200" ry="1.200" fill="#120a08"/><ellipse cx="32" cy="21" rx="2.200" ry="1.200" fill="#120a08"/><path d="M22 31Q27 29.500 32 31 27 34 22 31z" fill="#e8e0d8"/><path d="M8 40Q24 34 44 40V48H8z" fill="#2a2a6e"/><path d="M34 38 42 36 44 42z" fill="#d8d8e8"/><text x="24" y="43.500" font-family="Liberation Sans" font-weight="bold" font-size="7" fill="#f2f2f2" text-anchor="middle" letter-spacing=".2">OHTAY!</text></svg></div>
<div class="abs" style="left:-4px;top:236px;width:8px;height:8px;border-radius:4px;background:#f2f3f5"></div>
<div class="abs sv" style="left:12px;top:272px;border-radius:50%;background:#000"><svg width="48" height="48" viewBox="0 0 48 48"><defs><linearGradient id="ag" x1="0" y1="0" x2="0" y2="1"><stop offset="0" stop-color="#4fe0c8"/><stop offset="1" stop-color="#1f9a8a"/></linearGradient></defs><path d="M24 11.500 35.500 34H30.500L24 21.500 17.500 34H12.500z" fill="url(#ag)"/><path d="M21 31.500H27L28.500 35H19.500z" fill="url(#ag)"/></svg></div>
<div class="abs" style="left:40px;top:300px;width:24px;height:24px;border-radius:50%;background:#1e1f22"></div><div class="abs" style="left:44px;top:304px;width:16px;height:16px;border-radius:50%;background:#f23f43;font-size:12px;font-weight:bold;line-height:16px;text-align:center">1</div>
<div class="abs" style="left:-4px;top:292px;width:8px;height:8px;border-radius:4px;background:#f2f3f5"></div>
<div class="abs sv" style="left:12px;top:328px;border-radius:50%;overflow:hidden"><svg width="48" height="48" viewBox="0 0 48 48"><defs><linearGradient id="srp" x1="0" y1="0" x2="0" y2="1"><stop offset="0" stop-color="#f2b4b2"/><stop offset=".3" stop-color="#ec9a98"/><stop offset=".42" stop-color="#d86a68"/><stop offset=".62" stop-color="#8e2624"/><stop offset=".75" stop-color="#a84440"/><stop offset="1" stop-color="#d88a80"/></linearGradient></defs><rect width="48" height="48" fill="url(#srp)"/><path d="M35 4h3v38h-3zM2 16h3v10H2z" fill="#c8403c"/><path d="M36 6 14 22M37 6 48 18" stroke="#d86a66" stroke-width=".8"/><path d="M0 20H48V23H0z" fill="#b83a36"/><path d="M15 15h7v6h-7zM30 14h5v7h-5z" fill="#c23c38"/><path d="M0 30H48V36H0z" fill="#7a1e1c"/><path d="M14 38h16v4H14zM26 43h14v3H26z" fill="#e8a69c" opacity=".7"/><g transform="translate(0 0) skewX(-12)"><text x="34.500" y="29" font-family="Liberation Sans" font-weight="bold" font-size="13.500" fill="#fff" text-anchor="middle" stroke="#fff" stroke-width=".9" textLength="29" lengthAdjust="spacingAndGlyphs">SRP</text></g><path d="M3.500 18.500H14L12.500 28H2z" fill="#fff"/><path d="M5 20 11 23 4.500 26.500z" fill="#8e2624"/><path d="M6 21.200 9.500 23 5.700 25z" fill="#fff"/></svg></div>
<div class="abs" style="left:-4px;top:348px;width:8px;height:8px;border-radius:4px;background:#f2f3f5"></div>
<div class="abs sv" style="left:12px;top:384px;border-radius:50%;"><svg width="48" height="48" viewBox="0 0 48 48"><circle cx="24" cy="24" r="24" fill="#1ed51e"/><g transform="translate(24 24) scale(1 1.300) translate(-24 -24)"><text x="25.300" y="34.200" font-family="Liberation Sans" font-weight="bold" font-size="25" fill="#0c900c" stroke="#0c900c" stroke-width="2" text-anchor="middle" textLength="31" lengthAdjust="spacingAndGlyphs">RS</text><text x="24" y="33.200" font-family="Liberation Sans" font-weight="bold" font-size="25" fill="#fff" stroke="#fff" stroke-width="1.600" stroke-linejoin="round" text-anchor="middle" textLength="31" lengthAdjust="spacingAndGlyphs">RS</text></g></svg></div>
<div class="abs sv" style="left:12px;top:440px;border-radius:50%;"><div style="position:absolute;inset:0;border-radius:50%;background:linear-gradient(160deg,#1a5ad8 0%,#2a8ae8 22%,#3ac8e8 40%,#1a5ad8 52%,#0a2ab8 68%,#20a0b8 84%,#3a3ac0 100%)"></div><svg style="position:absolute;left:0;top:0" width="48" height="48" viewBox="0 0 48 48"><path d="M17.600 9H29.800L29.300 15H24.300V21.500H28.500V27.500H24.300V38.500L17.600 39.500z" fill="#fff"/></svg></div>
<div class="abs sv" style="left:12px;top:496px;border-radius:50%;background:#000"><svg width="48" height="48" viewBox="0 0 48 48"><path d="M9 20Q24 6 39 20" fill="none" stroke="#c03030" stroke-width="1.500"/><path d="M12 20Q16 13 24 13T36 20V24H12z" fill="#d8d8d8"/><path d="M15 19Q24 12 33 19z" fill="#555"/><rect x="6" y="25" width="36" height="6" fill="#000"/><text x="24" y="30.500" font-family="Liberation Sans" font-weight="bold" font-size="6.500" fill="#fff" text-anchor="middle" textLength="32" lengthAdjust="spacingAndGlyphs">SHIM TEAM</text><text x="24" y="36.500" font-family="Liberation Sans" font-weight="bold" font-size="4.500" fill="#c03030" text-anchor="middle" textLength="18">FAST BOY</text><path d="M12 37Q24 44 36 37" fill="none" stroke="#c03030" stroke-width="1.200"/></svg></div>
<svg class="abs" style="left:24px;top:564px" width="24" height="24" viewBox="0 0 24 24"><path fill="#5865f2" d="M2 5a3 3 0 0 1 3-3h3.930a2 2 0 0 1 1.660.900L12 5h7a3 3 0 0 1 3 3v11a3 3 0 0 1-3 3H5a3 3 0 0 1-3-3V5Z"/></svg>
<div class="abs sv" style="left:12px;top:608px;border-radius:50%;overflow:hidden"><svg width="48" height="48" viewBox="0 0 48 48"><rect width="48" height="48" fill="#2a181c"/><rect y="0" width="48" height="9" fill="#1a1418"/><rect x="18" y="1" width="12" height="5" fill="#d8d8e8" opacity=".7"/><rect x="19" y="2" width="4" height="3" fill="#c82a2a"/><path d="M0 10H48V22H0z" fill="#4a1e26"/><path d="M0 22H48V30H0z" fill="#6a2a30"/><g fill="#8a4a50" opacity=".6"><rect x="2" y="13" width="16" height="1.200"/><rect x="30" y="14" width="16" height="1.200"/><rect x="0" y="19" width="14" height="1.200"/><rect x="33" y="20" width="15" height="1.200"/></g><path d="M0 29H48V33H0z" fill="#3a2a2a"/><path d="M0 33H48V48H0z" fill="#c9a25a"/><path d="M0 33H48V36H0z" fill="#a8803e"/><path d="M4 40H44" stroke="#e8d8a8" stroke-width=".8"/><ellipse cx="24.500" cy="9.500" rx="2.300" ry="2.800" fill="#2e1e18"/><path d="M20 13Q24.500 11 29 13L30 26H19.500z" fill="#8a8e8e"/><path d="M19 14 17 25 18.500 26 20.500 16z" fill="#3a2620"/><path d="M30 14 32.500 25 31 26 29 16z" fill="#3a2620"/><path d="M19.500 25H30L30.500 32H19z" fill="#5c6264"/><path d="M20 32 19 42H21.500L23.500 32z" fill="#33221c"/><path d="M26 32 28 42H30.500L29.500 32z" fill="#33221c"/><rect x="18.500" y="41" width="3.500" height="2.500" fill="#eee"/><rect x="27.500" y="41" width="3.500" height="2.500" fill="#eee"/></svg></div>
<div class="abs sv" style="left:12px;top:664px;border-radius:16px;background:#fff;overflow:hidden"><svg width="48" height="48" viewBox="0 0 48 48"><text x="7" y="32.500" font-family="Liberation Sans" font-weight="bold" font-style="italic" font-size="19" fill="#e11" textLength="17" lengthAdjust="spacingAndGlyphs">R</text><text x="24" y="32.500" font-family="Liberation Sans" font-weight="bold" font-style="italic" font-size="19" fill="#111" textLength="17" lengthAdjust="spacingAndGlyphs">S</text></svg></div>
<div class="abs" style="left:40px;top:660px;width:24px;height:24px;border-radius:50%;background:#2b2d31"></div><div class="abs" style="left:44px;top:664px;width:16px;height:16px;border-radius:50%;background:#23a55a"></div><svg class="abs" style="left:46px;top:666px" width="12" height="12" viewBox="0 0 24 24"><path fill="#f2f3f5" d="M12 3a1 1 0 0 0-1-1h-.06a1 1 0 0 0-.74.320L5.920 7H3a1 1 0 0 0-1 1v8a1 1 0 0 0 1 1h2.920l4.280 4.680a1 1 0 0 0 .74.320H11a1 1 0 0 0 1-1V3ZM15.100 20.750c-.58.140-1.100-.330-1.100-.920v-.030c0-.500.370-.920.850-1.050a7 7 0 0 0 0-13.500A1.110 1.110 0 0 1 14 4.200v-.030c0-.600.520-1.060 1.100-.920a9 9 0 0 1 0 17.500Z"/><path fill="#f2f3f5" d="M15.160 16.510c-.570.280-1.160-.200-1.160-.830v-.140c0-.430.280-.800.630-1.020a3 3 0 0 0 0-5.040c-.350-.230-.630-.600-.630-1.020v-.140c0-.630.590-1.100 1.160-.830a5 5 0 0 1 0 9.020Z"/></svg>
<div class="abs" style="left:-4px;top:668px;width:8px;height:40px;border-radius:4px;background:#f2f3f5"></div>
<div class="abs newp" style="left:8px;top:30px;background:rgba(220,58,63,.88)">NEW</div>
<div class="abs newp" style="left:8px;top:688px;background:rgba(240,74,79,.9)">NEW</div>
<div class="abs" style="left:0;top:0;width:1280px;height:22px;background:#1e1f22"></div>
<svg class="abs" style="left:11px;top:6px" width="52" height="12" viewBox="0 0 52 12"><text x="0.500" y="10" font-family="Liberation Sans" font-weight="bold" font-size="10.500" fill="#8f9197" textLength="49.500" lengthAdjust="spacingAndGlyphs">Discord</text></svg>
<svg class="abs" style="left:1204px;top:5px" width="70" height="12" viewBox="0 0 70 12"><g fill="none" stroke="#b5bac1" stroke-width="1"><path d="M0.500 6.500h10"/><rect x="28.500" y="1.500" width="9" height="9"/><path d="M57 1.500 66 10.500M66 1.500 57 10.500"/></g></svg>
<!--/TITLE-->
<!--SERVERS-->
<div id="side">
<!--SIDE-->
<div class="abs" style="left:16px;top:13.5px;font-size:15px;line-height:20px;color:#f2f3f5;font-weight:bold;letter-spacing:-0.3px;white-space:nowrap">Bread Snatchers DRAFTS</div>
<svg class="abs" style="left:208px;top:16px" width="14" height="14" viewBox="0 0 24 24"><path stroke="#f2f3f5" stroke-width="1" fill="#f2f3f5" d="M5.300 9.300a1 1 0 0 1 1.400 0l5.300 5.290 5.300-5.300a1 1 0 1 1 1.400 1.420l-6 6a1 1 0 0 1-1.400 0l-6-6a1 1 0 0 1 0-1.400Z"/></svg>
<div class="abs" style="left:0;top:47px;width:240px;height:1px;background:#222327"></div><div class="abs" style="left:0;top:48px;width:240px;height:1px;background:#27292d"></div>
<svg class="abs" style="left:17px;top:66.5px" width="19" height="19" viewBox="0 0 24 24"><path fill="#949ba4" d="M7 1a1 1 0 0 1 1 1v.750c0 .140.110.250.250.250h7.500c.140 0 .250-.110.250-.250V2a1 1 0 1 1 2 0v.750c0 .140.110.250.250.250H19a3 3 0 0 1 3 3 1 1 0 0 1-1 1H3a1 1 0 0 1-1-1 3 3 0 0 1 3-3h.750c.140 0 .250-.110.250-.250V2a1 1 0 0 1 1-1Z"/><path fill="#949ba4" fill-rule="evenodd" d="M2 10a1 1 0 0 1 1-1h18a1 1 0 0 1 1 1v9a3 3 0 0 1-3 3H5a3 3 0 0 1-3-3v-9Zm3.500 2a.500.500 0 0 0-.500.500v3c0 .280.220.500.500.500h3a.500.500 0 0 0 .500-.500v-3a.500.500 0 0 0-.500-.500h-3Z"/></svg>
<div class="abs" style="left:42px;top:66.5px;font-size:15px;line-height:20px;color:#949ba4;font-weight:normal;letter-spacing:0px;white-space:nowrap">Events</div>
<div class="abs" style="left:8px;top:105px;width:224px;height:1px;background:#3a3c43"></div>
<svg class="abs" style="left:4px;top:128.5px" width="10" height="10" viewBox="0 0 24 24"><path stroke="#949ba4" stroke-width=".6" fill="#949ba4" d="M5.300 9.300a1 1 0 0 1 1.400 0l5.300 5.290 5.300-5.300a1 1 0 1 1 1.400 1.420l-6 6a1 1 0 0 1-1.400 0l-6-6a1 1 0 0 1 0-1.400Z"/></svg>
<div class="abs" style="left:16px;top:125.5px;font-size:11.5px;line-height:16px;color:#949ba4;font-weight:bold;letter-spacing:-0.05px;white-space:nowrap">TEXT CHANNELS</div>
<svg class="abs" style="left:16px;top:152px" width="20" height="20" viewBox="0 0 24 24"><path fill="#80848e" fill-rule="evenodd" d="M10.990 3.160A1 1 0 1 0 9 2.840L8.150 8H4a1 1 0 0 0 0 2h3.820l-.670 4H3a1 1 0 1 0 0 2h3.820l-.800 4.840a1 1 0 0 0 1.970.320L8.850 16h4.970l-.800 4.840a1 1 0 0 0 1.970.320l.860-5.160H20a1 1 0 1 0 0-2h-3.820l.670-4H21a1 1 0 1 0 0-2h-3.820l.800-4.840a1 1 0 1 0-1.970-.320L15.150 8h-4.970l.800-4.840ZM14.150 14l.670-4H9.850l-.670 4h4.970Z" clip-rule="evenodd"/></svg>
<div class="abs" style="left:42px;top:152.5px;font-size:16px;line-height:20px;color:#949ba4;font-weight:normal;letter-spacing:-0.15px;white-space:nowrap">welcome</div>
<svg class="abs" style="left:16px;top:186px" width="20" height="20" viewBox="0 0 24 24"><path fill="#80848e" fill-rule="evenodd" d="M10.990 3.160A1 1 0 1 0 9 2.840L8.150 8H4a1 1 0 0 0 0 2h3.820l-.670 4H3a1 1 0 1 0 0 2h3.820l-.800 4.840a1 1 0 0 0 1.970.320L8.850 16h4.970l-.800 4.840a1 1 0 0 0 1.970.320l.860-5.160H20a1 1 0 1 0 0-2h-3.820l.670-4H21a1 1 0 1 0 0-2h-3.820l.800-4.840a1 1 0 1 0-1.970-.320L15.150 8h-4.970l.800-4.840ZM14.150 14l.670-4H9.850l-.670 4h4.970Z" clip-rule="evenodd"/></svg>
<div class="abs" style="left:42px;top:186.5px;font-size:16px;line-height:20px;color:#949ba4;font-weight:normal;letter-spacing:-0.15px;white-space:nowrap">chat</div>
<svg class="abs" style="left:16px;top:220px" width="20" height="20" viewBox="0 0 24 24"><path fill="#80848e" fill-rule="evenodd" d="M10.990 3.160A1 1 0 1 0 9 2.840L8.150 8H4a1 1 0 0 0 0 2h3.820l-.670 4H3a1 1 0 1 0 0 2h3.820l-.800 4.840a1 1 0 0 0 1.970.320L8.850 16h4.970l-.800 4.840a1 1 0 0 0 1.970.320l.860-5.160H20a1 1 0 1 0 0-2h-3.820l.670-4H21a1 1 0 1 0 0-2h-3.820l.800-4.840a1 1 0 1 0-1.970-.320L15.150 8h-4.970l.800-4.840ZM14.150 14l.670-4H9.850l-.670 4h4.970Z" clip-rule="evenodd"/></svg>
<div class="abs" style="left:42px;top:220.5px;font-size:16px;line-height:20px;color:#949ba4;font-weight:normal;letter-spacing:0px;white-space:nowrap">looking-for-players</div>
<svg class="abs" style="left:16px;top:254px" width="20" height="20" viewBox="0 0 24 24"><path fill="#80848e" fill-rule="evenodd" d="M10.990 3.160A1 1 0 1 0 9 2.840L8.150 8H4a1 1 0 0 0 0 2h3.820l-.670 4H3a1 1 0 1 0 0 2h3.820l-.800 4.840a1 1 0 0 0 1.970.320L8.850 16h4.970l-.800 4.840a1 1 0 0 0 1.970.320l.860-5.160H20a1 1 0 1 0 0-2h-3.820l.670-4H21a1 1 0 1 0 0-2h-3.820l.800-4.840a1 1 0 1 0-1.970-.320L15.150 8h-4.970l.800-4.840ZM14.150 14l.670-4H9.850l-.670 4h4.970Z" clip-rule="evenodd"/></svg>
<div class="abs" style="left:42px;top:254.5px;font-size:16px;line-height:20px;color:#949ba4;font-weight:normal;letter-spacing:-0.15px;white-space:nowrap">cmds</div>
<svg class="abs" style="left:16px;top:288px" width="20" height="20" viewBox="0 0 24 24"><path fill="#80848e" fill-rule="evenodd" d="M10.990 3.160A1 1 0 1 0 9 2.840L8.150 8H4a1 1 0 0 0 0 2h3.820l-.670 4H3a1 1 0 1 0 0 2h3.820l-.800 4.840a1 1 0 0 0 1.970.320L8.850 16h4.970l-.800 4.840a1 1 0 0 0 1.970.320l.860-5.160H20a1 1 0 1 0 0-2h-3.820l.670-4H21a1 1 0 1 0 0-2h-3.820l.800-4.840a1 1 0 1 0-1.970-.320L15.150 8h-4.970l.800-4.840ZM14.150 14l.670-4H9.850l-.670 4h4.970Z" clip-rule="evenodd"/></svg>
<div class="abs" style="left:42px;top:288.5px;font-size:16px;line-height:20px;color:#949ba4;font-weight:normal;letter-spacing:-0.15px;white-space:nowrap">ign</div>
<svg class="abs" style="left:16px;top:322px" width="20" height="20" viewBox="0 0 24 24"><path fill="#80848e" fill-rule="evenodd" d="M10.990 3.160A1 1 0 1 0 9 2.840L8.150 8H4a1 1 0 0 0 0 2h3.820l-.670 4H3a1 1 0 1 0 0 2h3.820l-.800 4.840a1 1 0 0 0 1.970.320L8.850 16h4.970l-.800 4.840a1 1 0 0 0 1.970.320l.860-5.160H20a1 1 0 1 0 0-2h-3.820l.670-4H21a1 1 0 1 0 0-2h-3.820l.800-4.840a1 1 0 1 0-1.970-.320L15.150 8h-4.970l.800-4.840ZM14.150 14l.670-4H9.850l-.670 4h4.970Z" clip-rule="evenodd"/></svg>
<div class="abs" style="left:42px;top:322.5px;font-size:16px;line-height:20px;color:#949ba4;font-weight:normal;letter-spacing:-0.15px;white-space:nowrap">lf-token</div>
<svg class="abs" style="left:4px;top:372.5px" width="10" height="10" viewBox="0 0 24 24"><path stroke="#949ba4" stroke-width=".6" fill="#949ba4" d="M5.300 9.300a1 1 0 0 1 1.400 0l5.300 5.290 5.300-5.300a1 1 0 1 1 1.400 1.420l-6 6a1 1 0 0 1-1.400 0l-6-6a1 1 0 0 1 0-1.400Z"/></svg>
<div class="abs" style="left:16px;top:369.5px;font-size:11.5px;line-height:16px;color:#949ba4;font-weight:bold;letter-spacing:-0.05px;white-space:nowrap">VOICE CHANNELS</div>
<div class="abs" style="left:8px;top:391px;width:224px;height:32px;border-radius:4px;background:#404249"></div>
<svg class="abs" style="left:16px;top:397px" width="20" height="20" viewBox="0 0 24 24"><path fill="#80848e" d="M12 3a1 1 0 0 0-1-1h-.060a1 1 0 0 0-.740.320L5.920 7H3a1 1 0 0 0-1 1v8a1 1 0 0 0 1 1h2.920l4.280 4.680a1 1 0 0 0 .740.320H11a1 1 0 0 0 1-1V3ZM15.100 20.750c-.580.140-1.100-.330-1.100-.920v-.030c0-.500.370-.920.850-1.050a7 7 0 0 0 0-13.500A1.110 1.110 0 0 1 14 4.200v-.030c0-.600.520-1.060 1.100-.920a9 9 0 0 1 0 17.500Z"/><path fill="#80848e" d="M15.160 16.510c-.570.280-1.160-.200-1.160-.830v-.140c0-.430.280-.800.630-1.020a3 3 0 0 0 0-5.040c-.350-.230-.630-.600-.630-1.020v-.140c0-.630.590-1.100 1.160-.830a5 5 0 0 1 0 9.020Z"/></svg>
<div class="abs" style="left:42px;top:397.0px;font-size:15px;line-height:20px;color:#fff;font-weight:normal;letter-spacing:-0.55px;white-space:nowrap;-webkit-text-stroke:.4px #fff">VC (1)</div>
<svg class="abs" style="left:188px;top:400px" width="14" height="14" viewBox="0 0 24 24"><path fill="#b5bac1" d="M12 22a10 10 0 1 0-8.450-4.640c.130.190.110.440-.040.610l-2.060 2.370A1 1 0 0 0 2.200 22H12Z"/></svg>
<svg class="abs" style="left:207px;top:399px" width="16" height="16" viewBox="0 0 24 24"><path fill="#b5bac1" d="M14.500 8a3 3 0 1 0-2.700-4.300c-.200.400.060.860.440 1.120a5 5 0 0 1 2.140 3.080c.010.060.060.100.120.100ZM16.620 13.170c-.220.290-.590.400-.930.280a5.020 5.020 0 0 0-.690-.190c-.190-.040-.370-.170-.450-.360a5.500 5.500 0 0 0-.910-1.470c-.120-.140-.090-.360.070-.440.590-.310 1.220-.490 1.790-.490 1.220 0 2.500.560 3.500 1.500.270.260.200.700-.14.860-.870.410-1.640 1.030-2.240 1.810ZM10 13a5 5 0 0 0-5 5v2a1 1 0 0 0 1 1h8.090a.500.500 0 0 0 .410-.780A5 5 0 0 1 13.620 17c0-.920.250-1.790.680-2.540a.500.500 0 0 0-.130-.650A6 6 0 0 0 10 13ZM10 12a3.500 3.500 0 1 0 0-7 3.500 3.500 0 0 0 0 7ZM19 14a1 1 0 0 1 1 1v3h3a1 1 0 0 1 0 2h-3v3a1 1 0 0 1-2 0v-3h-3a1 1 0 1 1 0-2h3v-3a1 1 0 0 1 1-1Z"/></svg>
<div class="abs" style="left:44px;top:428.0px;width:24px;height:24px;border-radius:50%;overflow:hidden;"><svg width="100%" height="100%" viewBox="0 0 80 80" style="display:block"><rect width="80" height="80" fill="#0d0b17"/>
<rect x="0" y="29" width="80" height="51" fill="#8f8074"/><path d="M0 27H80V33H0z" fill="#33262a"/>
<ellipse cx="66" cy="24" rx="12" ry="2.200" fill="#d45a22"/><ellipse cx="13" cy="25" rx="9" ry="1.800" fill="#b0481c"/>
<rect x="1" y="26" width="3.500" height="22" fill="#3a4ad0"/><rect x="75.500" y="28" width="3.500" height="20" fill="#3a4ad0"/>
<path d="M5 50Q7 39 21 37H59Q73 39 75 50V66Q73 73 64 73H16Q7 73 5 66z" fill="#5639bd"/>
<path d="M9 46Q11 40 22 39H58Q69 40 71 46z" fill="#7255dc"/>
<path d="M12 53H68V61H12z" fill="#21164c"/><path d="M8 64H72V68H8z" fill="#3f2a98"/>
<g fill="#b9a6f2"><circle cx="14" cy="43" r="1"/><circle cx="62" cy="42" r="1.200"/><circle cx="66" cy="50" r="1"/><circle cx="10" cy="51" r="1"/><circle cx="20" cy="63" r="1.200"/><circle cx="60" cy="63" r="1"/><circle cx="26" cy="41" r=".9"/><circle cx="54" cy="47" r=".9"/></g>
<path d="M0 73H80V80H0z" fill="#6c6059"/><path d="M0 73 10 60 4 76z" fill="#a89888"/>
<g fill="#2fb6de"><ellipse cx="40" cy="11" rx="6.500" ry="6"/><circle cx="34.500" cy="5.500" r="1.800"/><circle cx="45.500" cy="5.500" r="1.800"/>
<path d="M30 18Q40 14 50 18L51 40Q40 44 29 40z"/><path d="M30 19 25 32 35 41 38 37 31 30 33 22z"/><path d="M50 19 55 32 45 41 42 37 49 30 47 22z"/>
<path d="M30 38 23.500 55 26.500 70H34L33 56 40 44z"/><path d="M50 38 56.500 55 53.500 70H46L47 56 40 44z"/></g>
<ellipse cx="40" cy="13.500" rx="3.600" ry="1.600" fill="#12303a"/><rect x="36" y="8" width="8" height="1.800" fill="#155066"/>
<g fill="#7a3ad0"><circle cx="33" cy="24" r="2"/><circle cx="47" cy="27" r="2"/><circle cx="27" cy="56" r="2.300"/><circle cx="53" cy="58" r="2.300"/><circle cx="44" cy="20" r="1.500"/><circle cx="31" cy="64" r="1.600"/></g>
<ellipse cx="40" cy="39" rx="4.500" ry="3.200" fill="#cfd6e4"/>
<ellipse cx="30" cy="71.500" rx="4.600" ry="2.600" fill="#e8e8ee"/><ellipse cx="50" cy="71.500" rx="4.600" ry="2.600" fill="#e8e8ee"/></svg></div>
<div class="abs" style="left:76px;top:430.5px;font-size:14px;line-height:20px;color:#949ba4;font-weight:normal;letter-spacing:0px;white-space:nowrap">flixyy</div>
<svg class="abs" style="left:208px;top:433px" width="14" height="14" viewBox="0 0 20 20"><ellipse cx="15.500" cy="11.300" rx="4.800" ry="6" fill="#7e90e6"/><ellipse cx="8" cy="15.600" rx="5.800" ry="3.700" fill="#7e90e6"/><ellipse cx="13" cy="15" rx="5" ry="3.800" fill="#8496ea"/><path d="M0 12 4 8.800 7 5.200 10 .9 12 2.500 14.700 1.900 16 4.200 16 7.800 14 10.800 11 12.800 7 13.800 5.500 15.600 4.200 14.800 5 12.800 2.500 12.900z" fill="#b5cf2e"/><path d="M10 .9 12 2.500 14.700 1.900 16 4.200 16 7.800 14 10.800 11 12.800 12.500 9 13.500 5z" fill="#9cc01f"/><path d="M6.800 6H10.200V8.800H9.400V10.800H7.200z" fill="#5a3ad8"/></svg>
<div class="abs" style="left:44px;top:460.0px;width:24px;height:24px;border-radius:50%;overflow:hidden;"><svg width="100%" height="100%" viewBox="0 0 80 80" style="display:block"><rect width="80" height="80" fill="#f5f0f0"/>
<path d="M6 22 22 14 28 52 10 60z" fill="#e8a0aa"/><path d="M10 28 24 22 27 48 13 54z" fill="#d84a5a"/><ellipse cx="14" cy="17" rx="9" ry="4" fill="#f0c8d0"/>
<path d="M20 6 30 10 26 18z" fill="#e03030"/><circle cx="6" cy="40" r="5" fill="#cc2828"/><circle cx="5" cy="52" r="4" fill="#cc2828"/>
<path d="M36 12Q52 2 70 14L66 20Q52 12 40 20z" fill="#e0808a"/><path d="M40 4 44 12 36 12z" fill="#d03030"/>
<path d="M36 22Q38 14 52 14T68 24L66 44Q60 52 50 52T36 42z" fill="#d82020"/><ellipse cx="48" cy="24" rx="6" ry="4" fill="#ee5a50"/>
<path d="M44 34Q52 42 62 32 58 46 50 44 45 42 44 34z" fill="#3a0808"/><path d="M47 39Q52 43 58 38 55 44 50 43z" fill="#fff"/>
<circle cx="47" cy="27" r="1.500" fill="#200"/><circle cx="57" cy="26" r="1.500" fill="#200"/>
<circle cx="26" cy="32" r="5.500" fill="#cc2424"/><path d="M30 32 38 34 37 40 30 37z" fill="#d02828"/>
<path d="M62 36 76 40 74 58 64 56z" fill="#e8c83a"/><circle cx="70" cy="62" r="6" fill="#c82424"/>
<path d="M34 46Q48 42 62 48L60 64 50 62 46 56 40 66 30 60z" fill="#2252b0"/>
<path d="M30 56 40 60 38 68 28 64z" fill="#b82020"/>
<path d="M16 58Q26 52 40 66L44 76Q30 80 20 70z" fill="#c8582a"/><path d="M18 58Q28 54 40 66L42 70Q30 62 17 62z" fill="#d8b040"/><path d="M38 62 48 70 44 77 38 70z" fill="#7a4aa0"/>
<path d="M56 62 64 64 62 74 54 72z" fill="#b82020"/></svg></div>
<div class="abs" style="left:76px;top:462.5px;font-size:14px;line-height:20px;color:#949ba4;font-weight:normal;letter-spacing:0px;white-space:nowrap">majifv</div>
<svg class="abs" style="left:208px;top:465px" width="14" height="14" viewBox="0 0 20 20"><ellipse cx="15.500" cy="11.300" rx="4.800" ry="6" fill="#7e90e6"/><ellipse cx="8" cy="15.600" rx="5.800" ry="3.700" fill="#7e90e6"/><ellipse cx="13" cy="15" rx="5" ry="3.800" fill="#8496ea"/><path d="M0 12 4 8.800 7 5.200 10 .9 12 2.500 14.700 1.900 16 4.200 16 7.800 14 10.800 11 12.800 7 13.800 5.500 15.600 4.200 14.800 5 12.800 2.500 12.900z" fill="#b5cf2e"/><path d="M10 .9 12 2.500 14.700 1.900 16 4.200 16 7.800 14 10.800 11 12.800 12.500 9 13.500 5z" fill="#9cc01f"/><path d="M6.800 6H10.200V8.800H9.400V10.800H7.200z" fill="#5a3ad8"/></svg>
<div class="abs" style="left:44px;top:492.0px;width:24px;height:24px;border-radius:50%;overflow:hidden;"><svg width="100%" height="100%" viewBox="0 0 80 80" style="display:block"><rect width="80" height="80" fill="#8a8c82"/><rect x="28" y="0" width="18" height="50" fill="#a8aaa0"/><rect x="46" y="0" width="34" height="80" fill="#4c5249"/>
<rect x="62" y="18" width="14" height="30" fill="#8a8c82" opacity=".6"/>
<path d="M16 6H22V26L26 28V50L22 56H17V34L6 36 4 30 16 27z" fill="#1a1c18"/><path d="M10 44 17 40 19 46 12 50z" fill="#1a1c18"/><path d="M22 52 26 66H22z" fill="#1a1c18"/><path d="M14 66 20 70 18 73 13 70z" fill="#1a1c18"/>
<path d="M36 22Q38 12 47 12T60 24L64 52 54 56 52 30 40 34z" fill="#3c2e26"/>
<path d="M38 24Q40 18 46 19L50 30Q48 38 44 38 39 36 38 30z" fill="#d0a898"/>
<path d="M26 48Q34 38 46 40 60 40 64 54L66 80H22z" fill="#e0e0d4"/><path d="M52 50 58 38 62 40 60 56z" fill="#d0a898"/><path d="M24 56 32 50 34 80H22z" fill="#c4c4b6"/><path d="M56 56 64 54 66 80H58z" fill="#c4c4b6"/></svg></div><div class="abs" style="left:44px;top:492.0px;width:24px;height:24px;border-radius:50%;border:2px solid #23a55a"></div>
<div class="abs" style="left:46px;top:494px;width:20px;height:20px;border-radius:50%;background:rgba(44,46,40,.5)"></div>
<div class="abs" style="left:76px;top:494.5px;font-size:14px;line-height:20px;color:#fff;font-weight:bold;letter-spacing:-0.55px;white-space:nowrap">villan</div>
<svg class="abs" style="left:208px;top:497px" width="14" height="14" viewBox="0 0 20 20"><ellipse cx="15.500" cy="11.300" rx="4.800" ry="6" fill="#7e90e6"/><ellipse cx="8" cy="15.600" rx="5.800" ry="3.700" fill="#7e90e6"/><ellipse cx="13" cy="15" rx="5" ry="3.800" fill="#8496ea"/><path d="M0 12 4 8.800 7 5.200 10 .9 12 2.500 14.700 1.900 16 4.200 16 7.800 14 10.800 11 12.800 7 13.800 5.500 15.600 4.200 14.800 5 12.800 2.500 12.900z" fill="#b5cf2e"/><path d="M10 .9 12 2.500 14.700 1.900 16 4.200 16 7.800 14 10.800 11 12.800 12.500 9 13.500 5z" fill="#9cc01f"/><path d="M6.800 6H10.200V8.800H9.400V10.800H7.200z" fill="#5a3ad8"/></svg>
<div class="abs" style="left:44px;top:524.0px;width:24px;height:24px;border-radius:50%;overflow:hidden;"><svg width="100%" height="100%" viewBox="0 0 80 80" style="display:block"><rect width="80" height="80" fill="#8e8e8e"/><rect x="28" y="0" width="18" height="50" fill="#b8b8b8"/><rect x="46" y="0" width="34" height="80" fill="#4a4a4a"/>
<rect x="62" y="18" width="14" height="30" fill="#8e8e8e" opacity=".6"/>
<path d="M16 6H22V26L26 28V50L22 56H17V34L6 36 4 30 16 27z" fill="#181818"/><path d="M10 44 17 40 19 46 12 50z" fill="#181818"/><path d="M22 52 26 66H22z" fill="#181818"/><path d="M14 66 20 70 18 73 13 70z" fill="#181818"/>
<path d="M36 22Q38 12 47 12T60 24L64 52 54 56 52 30 40 34z" fill="#3a3a3a"/>
<path d="M38 24Q40 18 46 19L50 30Q48 38 44 38 39 36 38 30z" fill="#c0c0c0"/>
<path d="M26 48Q34 38 46 40 60 40 64 54L66 80H22z" fill="#e2e2e2"/><path d="M52 50 58 38 62 40 60 56z" fill="#c0c0c0"/><path d="M24 56 32 50 34 80H22z" fill="#c4c4c4"/><path d="M56 56 64 54 66 80H58z" fill="#c4c4c4"/></svg></div>
<div class="abs" style="left:44px;top:524px;width:24px;height:24px;border-radius:50%;background:rgba(44,46,40,.45)"></div>
<div class="abs" style="left:76px;top:526.5px;font-size:14px;line-height:20px;color:#949ba4;font-weight:normal;letter-spacing:-0.6px;white-space:nowrap">Yung</div>
<svg class="abs" style="left:208px;top:529px" width="14" height="14" viewBox="0 0 20 20"><ellipse cx="15.500" cy="11.300" rx="4.800" ry="6" fill="#7e90e6"/><ellipse cx="8" cy="15.600" rx="5.800" ry="3.700" fill="#7e90e6"/><ellipse cx="13" cy="15" rx="5" ry="3.800" fill="#8496ea"/><path d="M0 12 4 8.800 7 5.200 10 .9 12 2.500 14.700 1.900 16 4.200 16 7.800 14 10.800 11 12.800 7 13.800 5.500 15.600 4.200 14.800 5 12.800 2.500 12.900z" fill="#b5cf2e"/><path d="M10 .9 12 2.500 14.700 1.900 16 4.200 16 7.800 14 10.800 11 12.800 12.500 9 13.500 5z" fill="#9cc01f"/><path d="M6.800 6H10.200V8.800H9.400V10.800H7.200z" fill="#5a3ad8"/></svg>
<div class="abs" style="left:166px;top:432px;width:38px;height:16px;border-radius:8px;background:#f23f43;font-size:12px;font-weight:bold;line-height:16px;text-align:center;letter-spacing:-.1px">LIVE</div>
<svg class="abs" style="left:168px;top:464px" width="16" height="16" viewBox="0 0 24 24"><g fill="#949ba4"><path d="M12 2a4 4 0 0 0-4 4v4a4 4 0 0 0 8 0V6a4 4 0 0 0-4-4Z"/><path d="M6 10a1 1 0 0 0-2 0 8 8 0 0 0 7 7.940V20H9a1 1 0 1 0 0 2h6a1 1 0 1 0 0-2h-2v-2.060A8 8 0 0 0 20 10a1 1 0 1 0-2 0 6 6 0 0 1-12 0Z"/></g><path d="M21 3 3 21" stroke="#2b2d31" stroke-width="5"/><path d="M21.500 2.500 2.500 21.500" stroke="#949ba4" stroke-width="2" stroke-linecap="round"/></svg>
<svg class="abs" style="left:188px;top:464px" width="16" height="16" viewBox="0 0 24 24"><g fill="#949ba4"><path d="M12 3a9 9 0 0 0-8.950 10h1.870a5 5 0 0 1 4.100 2.130l1.370 1.970a3.100 3.100 0 0 1-.170 3.780 2.850 2.850 0 0 1-3.550.740 11 11 0 0 1-5.670-9.620 11 11 0 0 1 22 0c0 4.150-2.300 7.760-5.670 9.620a2.850 2.850 0 0 1-3.550-.740 3.100 3.100 0 0 1-.170-3.780l1.380-1.970a5 5 0 0 1 4.100-2.130h1.860A9 9 0 0 0 12 3Z"/></g><path d="M21 3 3 21" stroke="#2b2d31" stroke-width="5"/><path d="M21.500 2.500 2.500 21.500" stroke="#949ba4" stroke-width="2" stroke-linecap="round"/></svg>
<div class="abs" style="left:0;top:553px;width:240px;height:145px;background:#232428"></div>
<div class="abs" style="left:0;top:644px;width:240px;height:1px;background:#2e3035"></div>
<svg class="abs" style="left:8px;top:562px" width="16" height="16" viewBox="0 0 16 16"><g fill="none" stroke="#28c163" stroke-width="1.700" stroke-linecap="round"><path d="M2 9.500A5 5 0 0 1 7 14.500"/><path d="M2 6A8.500 8.500 0 0 1 10.500 14.500"/><path d="M2 2.500A12 12 0 0 1 14 14.500"/></g><circle cx="2.700" cy="13.800" r="1.400" fill="#28c163"/></svg>
<div class="abs" style="left:28px;top:562.0px;font-size:13px;line-height:18px;color:#28c163;font-weight:bold;letter-spacing:-0.1px;white-space:nowrap">Voice Connected</div>
<div class="abs" style="left:8px;top:580.0px;font-size:11.5px;line-height:16px;color:#b5bac1;font-weight:normal;letter-spacing:-0.25px;white-space:nowrap">VC (1) / Bread Snatchers D...</div>
<svg class="abs" style="left:173px;top:569px" width="22" height="20" viewBox="0 0 22 20"><g stroke="#b5bac1" stroke-width="1.500" stroke-linecap="round"><path d="M2.500 7.500v5M6.700 4v12M11 2v16M15.300 4v12M19.500 7.500v5"/></g></svg>
<svg class="abs" style="left:205px;top:569px" width="22" height="20" viewBox="0 0 22 20"><path d="M2.200 13.500C1 9.500 5 6.500 11 6.500s10 3 8.800 7l-.3.700c-.2.500-.8.700-1.300.5l-2.600-1c-.5-.2-.8-.7-.7-1.200l.2-1.300c-2.600-1-5.600-1-8.200 0l.2 1.300c.1.500-.2 1-.7 1.200l-2.600 1c-.5.200-1.100 0-1.300-.5z" fill="#b5bac1"/></svg>
<div class="abs" style="left:8px;top:604px;width:50px;height:32px;border-radius:4px;background:#2b2d31"></div>
<div class="abs" style="left:66px;top:604px;width:50px;height:32px;border-radius:4px;background:#35373c"></div>
<div class="abs" style="left:124px;top:604px;width:50px;height:32px;border-radius:4px;background:#35373c"></div>
<div class="abs" style="left:182px;top:604px;width:50px;height:32px;border-radius:4px;background:#35373c"></div>
<svg class="abs" style="left:23px;top:610px" width="20" height="20" viewBox="0 0 24 24"><g fill="#5d6068"><path d="M4 4a3 3 0 0 0-3 3v10a3 3 0 0 0 3 3h11a3 3 0 0 0 3-3v-2.120a.500.500 0 0 1 .850-.360l3.290 3.300a.500.500 0 0 0 .860-.360V6.540a.500.500 0 0 0-.850-.350l-3.300 3.290a.500.500 0 0 1-.850-.360V7a3 3 0 0 0-3-3H4Z"/></g><path d="M21 3 3 21" stroke="#2b2d31" stroke-width="5"/><path d="M21.500 2.500 2.500 21.500" stroke="#5d6068" stroke-width="2" stroke-linecap="round"/></svg>
<svg class="abs" style="left:81px;top:610px" width="20" height="20" viewBox="0 0 24 24"><path fill="#f2f3f5" d="M2 4.500A2.500 2.500 0 0 1 4.500 2h15A2.500 2.500 0 0 1 22 4.500v10a2.500 2.500 0 0 1-2.500 2.500H13v2.500h3.500a1 1 0 0 1 0 2h-9a1 1 0 0 1 0-2H11V17H4.500A2.500 2.500 0 0 1 2 14.500z"/><path d="M7.500 13c.3-3 2.300-5 5.500-5.200V5.500l4.500 4-4.500 4v-2.400c-2.200 0-3.800.5-5.500 1.900z" fill="#35373c"/></svg>
<svg class="abs" style="left:139px;top:610px" width="20" height="20" viewBox="0 0 24 24"><path fill="#f2f3f5" d="M20.500 2.500c.6 0 1 .4 1 1 0 4.500-1.800 8.700-5.200 11.500l-.3 4.200c0 .4-.3.800-.6 1l-3.400 1.900c-.7.400-1.500-.1-1.500-.9v-3.400L7.700 15H4.300c-.800 0-1.300-.800-.900-1.500l1.900-3.400c.2-.3.600-.6 1-.6l4.200-.3C13.300 4.300 16 2.500 20.500 2.500zM15.500 10.500a2 2 0 1 0 0-4 2 2 0 0 0 0 4zM3 21c0-2.200 1.300-4 3.300-4.500.5-.1 1 .4.900.9C6.700 19.500 5.200 21 3 21z"/></svg>
<div class="abs" style="left:163px;top:602px;width:12px;height:12px;border-radius:50%;background:#232428"></div><div class="abs" style="left:165px;top:604px;width:8px;height:8px;border-radius:50%;background:#fff"></div>
<svg class="abs" style="left:197px;top:610px" width="20" height="20" viewBox="0 0 24 24"><path fill="#f2f3f5" d="M4.200 9.200 2 21Q1.900 22.100 3 21.900L14.800 20.500Q15.800 20.200 15.400 18z"/><ellipse cx="9.800" cy="13.600" rx="7.300" ry="3.500" transform="rotate(41 9.800 13.600)" fill="#35373c" stroke="#f2f3f5" stroke-width="1.600"/><g stroke="#f2f3f5" stroke-width="1.700" stroke-linecap="round" fill="none"><path d="M7.500 2.600 8.900 6.100M14 1.500 13 6.400M20.200 3.800 15.900 8.200M22.400 9.900 17.700 11.300M21.500 16.200 17.700 14.700"/></g></svg>
<div class="abs" style="left:8px;top:655.0px;width:32px;height:32px;border-radius:50%;overflow:hidden;"><svg width="100%" height="100%" viewBox="0 0 80 80" style="display:block"><rect width="80" height="80" fill="#8a8c82"/><rect x="28" y="0" width="18" height="50" fill="#a8aaa0"/><rect x="46" y="0" width="34" height="80" fill="#4c5249"/>
<rect x="62" y="18" width="14" height="30" fill="#8a8c82" opacity=".6"/>
<path d="M16 6H22V26L26 28V50L22 56H17V34L6 36 4 30 16 27z" fill="#1a1c18"/><path d="M10 44 17 40 19 46 12 50z" fill="#1a1c18"/><path d="M22 52 26 66H22z" fill="#1a1c18"/><path d="M14 66 20 70 18 73 13 70z" fill="#1a1c18"/>
<path d="M36 22Q38 12 47 12T60 24L64 52 54 56 52 30 40 34z" fill="#3c2e26"/>
<path d="M38 24Q40 18 46 19L50 30Q48 38 44 38 39 36 38 30z" fill="#d0a898"/>
<path d="M26 48Q34 38 46 40 60 40 64 54L66 80H22z" fill="#e0e0d4"/><path d="M52 50 58 38 62 40 60 56z" fill="#d0a898"/><path d="M24 56 32 50 34 80H22z" fill="#c4c4b6"/><path d="M56 56 64 54 66 80H58z" fill="#c4c4b6"/></svg></div><div class="abs" style="left:8px;top:655.0px;width:32px;height:32px;border-radius:50%;border:2px solid #23a55a"></div>
<div class="abs" style="left:10px;top:657px;width:28px;height:28px;border-radius:50%;background:rgba(44,46,40,.45)"></div>
<div class="abs" style="left:27px;top:675px;width:16px;height:16px;border-radius:50%;background:#232428"></div><div class="abs" style="left:30px;top:678px;width:10px;height:10px;border-radius:50%;background:#f23f43"></div><div class="abs" style="left:32.500px;top:682px;width:5px;height:2px;border-radius:1px;background:#232428"></div>
<div class="abs" style="left:48px;top:654.8px;font-size:14px;line-height:18px;color:#f2f3f5;font-weight:normal;letter-spacing:-0.15px;white-space:nowrap;-webkit-text-stroke:.3px #f2f3f5">villan</div>
<div class="abs" style="left:48px;top:672.7px;font-size:12px;line-height:16px;color:#b5bac1;font-weight:normal;letter-spacing:-0.33px;white-space:nowrap">Do Not Distu...</div>
<svg class="abs" style="left:142px;top:661px" width="20" height="20" viewBox="0 0 24 24"><path fill="#b5bac1" d="M12 2a4 4 0 0 0-4 4v4a4 4 0 0 0 8 0V6a4 4 0 0 0-4-4Z"/><path fill="#b5bac1" d="M6 10a1 1 0 0 0-2 0 8 8 0 0 0 7 7.940V20H9a1 1 0 1 0 0 2h6a1 1 0 1 0 0-2h-2v-2.060A8 8 0 0 0 20 10a1 1 0 1 0-2 0 6 6 0 0 1-12 0Z"/></svg>
<svg class="abs" style="left:174px;top:661px" width="20" height="20" viewBox="0 0 24 24"><path fill="#b5bac1" d="M12 3a9 9 0 0 0-8.950 10h1.870a5 5 0 0 1 4.100 2.130l1.370 1.970a3.100 3.100 0 0 1-.170 3.780 2.850 2.850 0 0 1-3.550.740 11 11 0 0 1-5.670-9.620 11 11 0 0 1 22 0c0 4.150-2.300 7.760-5.670 9.620a2.850 2.850 0 0 1-3.550-.740 3.100 3.100 0 0 1-.170-3.780l1.380-1.970a5 5 0 0 1 4.100-2.130h1.860A9 9 0 0 0 12 3Z"/></svg>
<svg class="abs" style="left:206px;top:661px" width="20" height="20" viewBox="0 0 20 20"><g fill="#b5bac1"><circle cx="10" cy="10" r="6.800"/><g><rect x="8" y="0.500" width="4" height="4.500" rx="1"/><rect x="8" y="15" width="4" height="4.500" rx="1"/></g><g transform="rotate(45 10 10)"><rect x="8" y="0.500" width="4" height="4.500" rx="1"/><rect x="8" y="15" width="4" height="4.500" rx="1"/></g><g transform="rotate(90 10 10)"><rect x="8" y="0.500" width="4" height="4.500" rx="1"/><rect x="8" y="15" width="4" height="4.500" rx="1"/></g><g transform="rotate(135 10 10)"><rect x="8" y="0.500" width="4" height="4.500" rx="1"/><rect x="8" y="15" width="4" height="4.500" rx="1"/></g></g><circle cx="10" cy="10" r="3.200" fill="#232428"/></svg>
<!--/SIDE-->
</div>
<div id="main">
<!--MAIN-->
<svg class="abs" style="left:16px;top:11px" width="24" height="24" viewBox="0 0 24 24"><path fill="#989ca5" d="M12 3a1 1 0 0 0-1-1h-.060a1 1 0 0 0-.740.320L5.920 7H3a1 1 0 0 0-1 1v8a1 1 0 0 0 1 1h2.920l4.280 4.680a1 1 0 0 0 .740.320H11a1 1 0 0 0 1-1V3ZM15.100 20.750c-.580.140-1.100-.330-1.100-.920v-.030c0-.500.370-.920.850-1.050a7 7 0 0 0 0-13.500A1.110 1.110 0 0 1 14 4.200v-.030c0-.600.520-1.060 1.100-.920a9 9 0 0 1 0 17.500Z"/><path fill="#989ca5" d="M15.160 16.510c-.570.280-1.160-.200-1.160-.830v-.140c0-.430.280-.800.630-1.020a3 3 0 0 0 0-5.040c-.350-.230-.630-.600-.630-1.020v-.140c0-.630.590-1.100 1.160-.830a5 5 0 0 1 0 9.020Z"/></svg>
<div class="abs" style="left:48px;top:13.5px;font-size:15px;line-height:20px;color:#f2f3f5;font-weight:bold;letter-spacing:-0.4px;white-space:nowrap">VC (1)</div>
<div class="abs" style="left:105px;top:12px;width:1px;height:24px;background:#35373c"></div>
<div class="abs" style="left:122px;top:11.5px;width:24px;height:24px;border-radius:50%;overflow:hidden;"><svg width="100%" height="100%" viewBox="0 0 80 80" style="display:block"><rect width="80" height="80" fill="#0d0b17"/>
<rect x="0" y="29" width="80" height="51" fill="#8f8074"/><path d="M0 27H80V33H0z" fill="#33262a"/>
<ellipse cx="66" cy="24" rx="12" ry="2.200" fill="#d45a22"/><ellipse cx="13" cy="25" rx="9" ry="1.800" fill="#b0481c"/>
<rect x="1" y="26" width="3.500" height="22" fill="#3a4ad0"/><rect x="75.500" y="28" width="3.500" height="20" fill="#3a4ad0"/>
<path d="M5 50Q7 39 21 37H59Q73 39 75 50V66Q73 73 64 73H16Q7 73 5 66z" fill="#5639bd"/>
<path d="M9 46Q11 40 22 39H58Q69 40 71 46z" fill="#7255dc"/>
<path d="M12 53H68V61H12z" fill="#21164c"/><path d="M8 64H72V68H8z" fill="#3f2a98"/>
<g fill="#b9a6f2"><circle cx="14" cy="43" r="1"/><circle cx="62" cy="42" r="1.200"/><circle cx="66" cy="50" r="1"/><circle cx="10" cy="51" r="1"/><circle cx="20" cy="63" r="1.200"/><circle cx="60" cy="63" r="1"/><circle cx="26" cy="41" r=".9"/><circle cx="54" cy="47" r=".9"/></g>
<path d="M0 73H80V80H0z" fill="#6c6059"/><path d="M0 73 10 60 4 76z" fill="#a89888"/>
<g fill="#2fb6de"><ellipse cx="40" cy="11" rx="6.500" ry="6"/><circle cx="34.500" cy="5.500" r="1.800"/><circle cx="45.500" cy="5.500" r="1.800"/>
<path d="M30 18Q40 14 50 18L51 40Q40 44 29 40z"/><path d="M30 19 25 32 35 41 38 37 31 30 33 22z"/><path d="M50 19 55 32 45 41 42 37 49 30 47 22z"/>
<path d="M30 38 23.500 55 26.500 70H34L33 56 40 44z"/><path d="M50 38 56.500 55 53.500 70H46L47 56 40 44z"/></g>
<ellipse cx="40" cy="13.500" rx="3.600" ry="1.600" fill="#12303a"/><rect x="36" y="8" width="8" height="1.800" fill="#155066"/>
<g fill="#7a3ad0"><circle cx="33" cy="24" r="2"/><circle cx="47" cy="27" r="2"/><circle cx="27" cy="56" r="2.300"/><circle cx="53" cy="58" r="2.300"/><circle cx="44" cy="20" r="1.500"/><circle cx="31" cy="64" r="1.600"/></g>
<ellipse cx="40" cy="39" rx="4.500" ry="3.200" fill="#cfd6e4"/>
<ellipse cx="30" cy="71.500" rx="4.600" ry="2.600" fill="#e8e8ee"/><ellipse cx="50" cy="71.500" rx="4.600" ry="2.600" fill="#e8e8ee"/></svg></div>
<div class="abs" style="left:154px;top:13.5px;font-size:15px;line-height:20px;color:#f2f3f5;font-weight:bold;letter-spacing:-0.5px;white-space:nowrap">flixyy’s Screen</div>
<div class="abs" style="left:266px;top:11.5px;width:24px;height:24px;border-radius:50%;overflow:hidden;"><svg width="100%" height="100%" viewBox="0 0 80 80" style="display:block"><rect width="80" height="80" fill="#8a8c82"/><rect x="28" y="0" width="18" height="50" fill="#a8aaa0"/><rect x="46" y="0" width="34" height="80" fill="#4c5249"/>
<rect x="62" y="18" width="14" height="30" fill="#8a8c82" opacity=".6"/>
<path d="M16 6H22V26L26 28V50L22 56H17V34L6 36 4 30 16 27z" fill="#1a1c18"/><path d="M10 44 17 40 19 46 12 50z" fill="#1a1c18"/><path d="M22 52 26 66H22z" fill="#1a1c18"/><path d="M14 66 20 70 18 73 13 70z" fill="#1a1c18"/>
<path d="M36 22Q38 12 47 12T60 24L64 52 54 56 52 30 40 34z" fill="#3c2e26"/>
<path d="M38 24Q40 18 46 19L50 30Q48 38 44 38 39 36 38 30z" fill="#d0a898"/>
<path d="M26 48Q34 38 46 40 60 40 64 54L66 80H22z" fill="#e0e0d4"/><path d="M52 50 58 38 62 40 60 56z" fill="#d0a898"/><path d="M24 56 32 50 34 80H22z" fill="#c4c4b6"/><path d="M56 56 64 54 66 80H58z" fill="#c4c4b6"/></svg></div><div class="abs" style="left:266px;top:11.500px;width:24px;height:24px;border-radius:50%;background:rgba(20,22,16,.55)"></div>
<svg class="abs" style="left:598px;top:11px" width="25" height="25" viewBox="0 0 24 24"><path fill="#b5bac1" d="M14.500 8a3 3 0 1 0-2.700-4.300c-.200.400.060.860.440 1.120a5 5 0 0 1 2.140 3.080c.010.060.060.100.120.100ZM16.620 13.170c-.220.290-.590.400-.930.280a5.020 5.020 0 0 0-.690-.190c-.190-.040-.370-.170-.450-.360a5.500 5.500 0 0 0-.910-1.470c-.120-.140-.090-.360.070-.440.590-.310 1.220-.490 1.790-.490 1.220 0 2.500.560 3.500 1.500.270.260.200.700-.14.860-.870.410-1.640 1.030-2.240 1.810ZM10 13a5 5 0 0 0-5 5v2a1 1 0 0 0 1 1h8.090a.500.500 0 0 0 .410-.780A5 5 0 0 1 13.620 17c0-.920.250-1.790.680-2.540a.500.500 0 0 0-.130-.650A6 6 0 0 0 10 13ZM10 12a3.500 3.500 0 1 0 0-7 3.500 3.500 0 0 0 0 7ZM19 14a1 1 0 0 1 1 1v3h3a1 1 0 0 1 0 2h-3v3a1 1 0 0 1-2 0v-3h-3a1 1 0 1 1 0-2h3v-3a1 1 0 0 1 1-1Z"/></svg>
<div class="abs" style="left:640px;top:16px;width:135px;height:16px;border-radius:8px;background:#4e5058;overflow:hidden;font-size:14px;font-weight:bold;line-height:16.500px;color:#fff;white-space:nowrap"><div class="abs" style="left:6px;top:0;letter-spacing:0">720p 30FPS</div><div class="abs" style="left:92px;top:0;width:43px;height:16px;background:#f23f43;text-align:center;padding-right:2px;letter-spacing:-.2px">LIVE</div></div>
<svg class="abs" style="left:793px;top:14px" width="20" height="20" viewBox="0 0 20 20"><g fill="#b5bac1"><rect x="0" y="0" width="9" height="9" rx="2"/><rect x="11" y="0" width="9" height="9" rx="2"/><rect x="0" y="11" width="9" height="9" rx="2"/><rect x="11" y="11" width="9" height="9" rx="2"/></g></svg>
<svg class="abs" style="left:833px;top:13px" width="22" height="22" viewBox="0 0 22 22"><path d="M3 1h14a3 3 0 0 1 3 3v8h-2V4a1 1 0 0 0-1-1H3a1 1 0 0 0-1 1v14a1 1 0 0 0 1 1h9v2H3a3 3 0 0 1-3-3V4a3 3 0 0 1 3-3z" fill="#b5bac1"/><path d="M2 11h6a2 2 0 0 1 2 2v6H2z" fill="#b5bac1"/><circle cx="16.500" cy="17" r="4.300" fill="#f23f43"/></svg>
<svg class="abs" style="left:872px;top:21px" width="22" height="6" viewBox="0 0 22 6"><g fill="#b5bac1"><circle cx="3" cy="3" r="2"/><circle cx="11" cy="3" r="2"/><circle cx="19" cy="3" r="2"/></g></svg>
<div class="abs" style="left:911px;top:12px;width:1px;height:24px;background:#35373c"></div>
<svg class="abs" style="left:928px;top:12.5px" width="23" height="23" viewBox="0 0 24 24"><path fill="#b5bac1" d="M12 22a10 10 0 1 0-8.450-4.640c.130.190.110.440-.040.610l-2.060 2.370A1 1 0 0 0 2.200 22H12Z"/></svg>
<div class="abs" style="left:157px;top:83.5px;width:77px;height:1.5px;background:#1e1e1e;"></div>
<div class="abs" style="left:236px;top:93.5px;width:42px;height:1px;background:#8a8a8a;"></div>
<div class="abs" style="left:280px;top:83px;width:10px;height:1.5px;background:#777;"></div>
<div class="abs" style="left:282px;top:88px;width:22px;height:1.5px;background:#7a7a7a;"></div>
<div class="abs" style="left:308px;top:88px;width:22px;height:1.5px;background:#7a7a7a;"></div>
<div class="abs" style="left:282px;top:92px;width:22px;height:1.5px;background:#5a5a5a;"></div>
<div class="abs" style="left:308px;top:92px;width:22px;height:1.5px;background:#5a5a5a;"></div>
<div class="abs" style="left:282px;top:96px;width:22px;height:1.5px;background:#5a5a5a;"></div>
<div class="abs" style="left:308px;top:96px;width:22px;height:1.5px;background:#5a5a5a;"></div>
<div class="abs" style="left:280px;top:103.5px;width:43px;height:1.5px;background:#d0d0d0;"></div>
<div class="abs" style="left:425px;top:82px;font-size:6.200px;font-weight:bold;color:#484848;line-height:8px;white-space:nowrap;letter-spacing:-.05px">Limit N0daz &nbsp;8435-8744-5643 version 18</div>
<div class="abs" style="left:707px;top:84px;width:31px;height:1.5px;background:#6a6a6a;"></div>
<div class="abs" style="left:792px;top:80px;width:21px;height:418px;border-right:1px solid #242424;border-bottom:1px solid #060606;border-radius:0 0 7px 0"></div>
<svg class="abs" style="left:176px;top:465px" width="18" height="18" viewBox="0 0 24 24"><path fill="#fff" d="M2 4.500A2.500 2.500 0 0 1 4.500 2h15A2.500 2.500 0 0 1 22 4.500v10a2.500 2.500 0 0 1-2.500 2.500H13v2.500h3.500a1 1 0 0 1 0 2h-9a1 1 0 0 1 0-2H11V17H4.500A2.500 2.500 0 0 1 2 14.500z"/></svg>
<div class="abs" style="left:204px;top:463.5px;font-size:16px;line-height:20px;color:#f2f3f5;font-weight:normal;letter-spacing:0px;white-space:nowrap">flixyy</div>
<svg class="abs" style="left:160px;top:478px" width="16" height="7" viewBox="0 0 16 7"><path d="M1 3.500Q4.500 0 8 3.500 4.500 7 1 3.500z" fill="none" stroke="#ddd" stroke-width="1"/><circle cx="4.500" cy="3.500" r="1" fill="#ddd"/><rect x="12" y="1.500" width="1" height="3" fill="#bbb"/></svg>
<svg class="abs" style="left:780px;top:464px" width="22" height="20" viewBox="0 0 22 20"><rect x="6" y="3" width="6" height="9" rx="3" fill="#eee"/><path d="M3.500 9.500a5.500 5.500 0 0 0 11 0M9 15v3M6 18.500h6" fill="none" stroke="#eee" stroke-width="1.300"/><circle cx="15.500" cy="4" r="3" fill="#000" stroke="#eee" stroke-width="1.200"/><path d="M13.700 5.500 17.300 2.500" stroke="#eee" stroke-width="1.100"/></svg>
<svg class="abs" style="left:750px;top:482px" width="10" height="10" viewBox="0 0 10 10"><circle cx="5" cy="5" r="3.800" fill="none" stroke="#3a3a3a" stroke-width="1"/></svg>
<div class="abs" style="left:765px;top:482.5px;font-size:5.200px;font-weight:bold;line-height:8px;color:#ddd;white-space:nowrap;letter-spacing:-.12px">STAR<span style="color:#666">TING G</span>AME</div>
<div class="abs" style="left:8px;top:506px;width:184px;height:112px;border-radius:8px;background:#0a0a0a;overflow:hidden"><svg class="abs" style="left:4px;top:0" width="176" height="112" viewBox="0 0 176 112">
<rect width="176" height="112" fill="#4a3f2d"/>
<rect width="176" height="16" fill="#343c16"/><rect y="10" width="176" height="6" fill="#2a3012"/>
<g>
<path d="M0 16 92 22 92 30 0 26z" fill="#5f5239"/><path d="M0 26 92 30 92 37 0 36z" fill="#463b29"/>
<path d="M0 36 92 37 92 44 0 47z" fill="#6b5d42"/><path d="M0 47 92 44 92 50 0 57z" fill="#4d4230"/>
<path d="M0 57 92 50 92 56 0 68z" fill="#74654a"/><path d="M0 68 92 56 92 62 0 80z" fill="#52452f"/>
<path d="M0 80 92 62 96 70 0 94z" fill="#63553c"/><path d="M0 94 96 70 104 80 0 112z" fill="#3c3224"/>
</g>
<g>
<path d="M94 18 164 24 164 31 96 26z" fill="#7d6c49"/><path d="M96 26 164 31 164 38 98 34z" fill="#93805a"/>
<path d="M98 34 164 38 164 45 100 42z" fill="#776645"/><path d="M100 42 164 45 164 52 102 50z" fill="#8f7c55"/>
<path d="M102 50 164 52 164 59 106 58z" fill="#7f6e4b"/><path d="M106 58 164 59 164 66 110 66z" fill="#94825b"/>
<path d="M110 66 164 66 164 73 116 74z" fill="#7a6947"/><path d="M116 74 164 73 164 80 122 82z" fill="#8a7852"/>
</g>
<path d="M96 70 122 82 164 80 164 112 40 112z" fill="#5a4d37"/>
<path d="M100 76 126 88 122 112 96 112z" fill="#75674a"/><path d="M126 88 164 84 164 96 128 100z" fill="#4a3f2c"/><path d="M60 112 98 78 104 82 76 112z" fill="#2e271c"/>
<rect x="164" y="0" width="12" height="112" fill="#31372a"/><rect x="166" y="42" width="5" height="22" fill="#5d6a1e"/>
<rect x="152" y="0" width="18" height="11" fill="#040404"/>
<path d="M62 48Q66 42 72 46L76 58 78 74 76 104H62L60 74z" fill="#1d1f23"/><ellipse cx="67" cy="47" rx="4.500" ry="5" fill="#5a2632"/><path d="M56 66 62 62 62 74z" fill="#2a4a6a"/>
<rect x="8" y="101" width="22" height="3" fill="#1d6a1d"/><rect x="76" y="12" width="25" height="2.500" fill="#0a5a98"/>
<rect x="6" y="1" width="18" height="2" fill="#5a6a5a"/><rect x="6" y="5" width="14" height="2" fill="#2a7a7a"/>
<g fill="#2a5a8a"><rect x="150" y="96" width="5" height="5"/><rect x="157" y="96" width="5" height="5"/><rect x="164" y="96" width="5" height="5"/></g><rect x="157" y="103" width="5" height="4" fill="#8a5a2a"/>
<rect x="158" y="24" width="4" height="3" fill="#2a4a9a"/><rect x="165" y="24" width="4" height="3" fill="#8a2a2a"/>
<rect width="176" height="112" fill="#000" opacity=".22"/><path d="M100 0H152V16H100z" fill="#4a5a1e" opacity=".5"/></svg><svg class="abs" style="left:0;top:0" width="184" height="112"><path d="M72 18H104L93 37z" fill="#000"/></svg></div>
<div class="abs" style="left:146px;top:514px;width:38px;height:16px;border-radius:8px;background:#86262a;font-size:12px;font-weight:bold;line-height:16px;text-align:center;color:#9e9696;letter-spacing:-.1px">LIVE</div>
<svg class="abs" style="left:84px;top:546px" width="32" height="32" viewBox="0 0 24 24"><path fill="#f2f2f2" d="M4 4a3 3 0 0 0-3 3v10a3 3 0 0 0 3 3h11a3 3 0 0 0 3-3v-2.120a.500.500 0 0 1 .850-.360l3.290 3.300a.500.500 0 0 0 .860-.360V6.540a.500.500 0 0 0-.850-.350l-3.300 3.290a.500.500 0 0 1-.850-.360V7a3 3 0 0 0-3-3H4Z"/></svg>
<div class="abs" style="left:16px;top:578px;width:87px;height:32px;border-radius:8px;background:rgba(0,0,0,.6)"></div>
<svg class="abs" style="left:29px;top:585px" width="18" height="18" viewBox="0 0 24 24"><path fill="#d6d6d6" d="M2 4.500A2.500 2.500 0 0 1 4.500 2h15A2.500 2.500 0 0 1 22 4.500v10a2.500 2.500 0 0 1-2.500 2.500H13v2.500h3.500a1 1 0 0 1 0 2h-9a1 1 0 0 1 0-2H11V17H4.500A2.500 2.500 0 0 1 2 14.500z"/></svg>
<div class="abs" style="left:56px;top:584.0px;font-size:16px;line-height:20px;color:#f2f3f5;font-weight:normal;letter-spacing:0px;white-space:nowrap">flixyy</div>
<div class="abs" style="left:132px;top:582px;width:24px;height:24px;border-radius:50%;background:rgba(0,0,0,.55)"></div>
<div class="abs" style="left:160px;top:582px;width:24px;height:24px;border-radius:50%;background:rgba(0,0,0,.55)"></div>
<svg class="abs" style="left:136px;top:586px" width="16" height="16" viewBox="0 0 24 24"><path fill="#e0e0e0" d="M12 3a1 1 0 0 0-1-1h-.060a1 1 0 0 0-.740.320L5.920 7H3a1 1 0 0 0-1 1v8a1 1 0 0 0 1 1h2.920l4.280 4.680a1 1 0 0 0 .740.320H11a1 1 0 0 0 1-1V3Z"/><path d="M15.500 9l6 6M21.500 9l-6 6" stroke="#e0e0e0" stroke-width="2" stroke-linecap="round"/></svg>
<svg class="abs" style="left:165px;top:592px" width="14" height="4" viewBox="0 0 14 4"><g fill="#e8e8e8"><circle cx="2" cy="2" r="1.400"/><circle cx="7" cy="2" r="1.400"/><circle cx="12" cy="2" r="1.400"/></g></svg>
<div class="abs" style="left:200px;top:506px;width:184px;height:112px;border-radius:8px;background:linear-gradient(180deg,#2b2e49 0%,#2b2e49 35%,#1e2033 100%);"></div>
<div class="abs" style="left:252px;top:522px;width:80px;height:80px;border-radius:50%;overflow:hidden"><svg width="100%" height="100%" viewBox="0 0 80 80" style="display:block"><rect width="80" height="80" fill="#0d0b17"/>
<rect x="0" y="29" width="80" height="51" fill="#8f8074"/><path d="M0 27H80V33H0z" fill="#33262a"/>
<ellipse cx="66" cy="24" rx="12" ry="2.200" fill="#d45a22"/><ellipse cx="13" cy="25" rx="9" ry="1.800" fill="#b0481c"/>
<rect x="1" y="26" width="3.500" height="22" fill="#3a4ad0"/><rect x="75.500" y="28" width="3.500" height="20" fill="#3a4ad0"/>
<path d="M5 50Q7 39 21 37H59Q73 39 75 50V66Q73 73 64 73H16Q7 73 5 66z" fill="#5639bd"/>
<path d="M9 46Q11 40 22 39H58Q69 40 71 46z" fill="#7255dc"/>
<path d="M12 53H68V61H12z" fill="#21164c"/><path d="M8 64H72V68H8z" fill="#3f2a98"/>
<g fill="#b9a6f2"><circle cx="14" cy="43" r="1"/><circle cx="62" cy="42" r="1.200"/><circle cx="66" cy="50" r="1"/><circle cx="10" cy="51" r="1"/><circle cx="20" cy="63" r="1.200"/><circle cx="60" cy="63" r="1"/><circle cx="26" cy="41" r=".9"/><circle cx="54" cy="47" r=".9"/></g>
<path d="M0 73H80V80H0z" fill="#6c6059"/><path d="M0 73 10 60 4 76z" fill="#a89888"/>
<g fill="#2fb6de"><ellipse cx="40" cy="11" rx="6.500" ry="6"/><circle cx="34.500" cy="5.500" r="1.800"/><circle cx="45.500" cy="5.500" r="1.800"/>
<path d="M30 18Q40 14 50 18L51 40Q40 44 29 40z"/><path d="M30 19 25 32 35 41 38 37 31 30 33 22z"/><path d="M50 19 55 32 45 41 42 37 49 30 47 22z"/>
<path d="M30 38 23.500 55 26.500 70H34L33 56 40 44z"/><path d="M50 38 56.500 55 53.500 70H46L47 56 40 44z"/></g>
<ellipse cx="40" cy="13.500" rx="3.600" ry="1.600" fill="#12303a"/><rect x="36" y="8" width="8" height="1.800" fill="#155066"/>
<g fill="#7a3ad0"><circle cx="33" cy="24" r="2"/><circle cx="47" cy="27" r="2"/><circle cx="27" cy="56" r="2.300"/><circle cx="53" cy="58" r="2.300"/><circle cx="44" cy="20" r="1.500"/><circle cx="31" cy="64" r="1.600"/></g>
<ellipse cx="40" cy="39" rx="4.500" ry="3.200" fill="#cfd6e4"/>
<ellipse cx="30" cy="71.500" rx="4.600" ry="2.600" fill="#e8e8ee"/><ellipse cx="50" cy="71.500" rx="4.600" ry="2.600" fill="#e8e8ee"/></svg></div>
<div class="abs" style="left:208px;top:578px;width:59px;height:32px;border-radius:8px;background:rgba(0,0,0,.6)"></div>
<div class="abs" style="left:220px;top:584.0px;font-size:16px;line-height:20px;color:#f2f3f5;font-weight:normal;letter-spacing:0px;white-space:nowrap">flixyy</div>
<div class="abs" style="left:344px;top:578px;width:32px;height:32px;border-radius:50%;background:rgba(0,0,0,.6)"></div><svg class="abs" style="left:350px;top:584.3px" width="20" height="20" viewBox="0 0 20 20"><ellipse cx="15.500" cy="11.300" rx="4.800" ry="6" fill="#7e90e6"/><ellipse cx="8" cy="15.600" rx="5.800" ry="3.700" fill="#7e90e6"/><ellipse cx="13" cy="15" rx="5" ry="3.800" fill="#8496ea"/><path d="M0 12 4 8.800 7 5.200 10 .9 12 2.500 14.700 1.900 16 4.200 16 7.800 14 10.800 11 12.800 7 13.800 5.500 15.600 4.200 14.800 5 12.800 2.500 12.900z" fill="#b5cf2e"/><path d="M10 .9 12 2.500 14.700 1.900 16 4.200 16 7.800 14 10.800 11 12.800 12.500 9 13.500 5z" fill="#9cc01f"/><path d="M6.800 6H10.200V8.800H9.400V10.800H7.200z" fill="#5a3ad8"/></svg>
<div class="abs" style="left:392px;top:506px;width:184px;height:112px;border-radius:8px;background:linear-gradient(180deg,#696969 0%,#686868 35%,#484848 100%);"></div>
<div class="abs" style="left:444px;top:522px;width:80px;height:80px;border-radius:50%;overflow:hidden"><svg width="100%" height="100%" viewBox="0 0 80 80" style="display:block"><rect width="80" height="80" fill="#5e5e5e"/><rect x="28" y="0" width="18" height="50" fill="#686868"/><rect x="46" y="0" width="34" height="80" fill="#4a4a4a"/>
<rect x="62" y="18" width="14" height="30" fill="#5e5e5e" opacity=".6"/>
<path d="M16 6H22V26L26 28V50L22 56H17V34L6 36 4 30 16 27z" fill="#141414"/><path d="M10 44 17 40 19 46 12 50z" fill="#141414"/><path d="M22 52 26 66H22z" fill="#141414"/><path d="M14 66 20 70 18 73 13 70z" fill="#141414"/>
<path d="M36 22Q38 12 47 12T60 24L64 52 54 56 52 30 40 34z" fill="#2c2c2c"/>
<path d="M38 24Q40 18 46 19L50 30Q48 38 44 38 39 36 38 30z" fill="#a8a8a8"/>
<path d="M26 48Q34 38 46 40 60 40 64 54L66 80H22z" fill="#cdcdcd"/><path d="M52 50 58 38 62 40 60 56z" fill="#a8a8a8"/><path d="M24 56 32 50 34 80H22z" fill="#b4b4b4"/><path d="M56 56 64 54 66 80H58z" fill="#b4b4b4"/></svg></div>
<div class="abs" style="left:454px;top:514px;width:60px;height:30px;border-radius:15px;background:#2b2d31"></div>
<svg class="abs" style="left:461px;top:521px" width="17" height="17" viewBox="0 0 24 24"><path stroke="#fff" stroke-width=".8" fill="#fff" d="M5.300 9.300a1 1 0 0 1 1.400 0l5.300 5.290 5.300-5.300a1 1 0 1 1 1.400 1.420l-6 6a1 1 0 0 1-1.400 0l-6-6a1 1 0 0 1 0-1.400Z"/></svg>
<svg class="abs" style="left:483px;top:517px" width="23" height="23" viewBox="0 0 24 24"><path fill="#fff" d="M14.500 8a3 3 0 1 0-2.700-4.300c-.200.400.060.860.440 1.120a5 5 0 0 1 2.140 3.080c.010.060.060.100.120.100ZM18.440 17.270c.150.430.540.730 1 .730h1.060c.830 0 1.500-.670 1.500-1.500a7.500 7.500 0 0 0-6.500-7.430c-.550-.080-.990.380-1.100.920-.060.300-.150.600-.260.870-.230.580-.050 1.300.470 1.630a9.530 9.530 0 0 1 3.830 4.780ZM12.500 9a3 3 0 1 1-6 0 3 3 0 0 1 6 0ZM2 20.500a7.500 7.500 0 0 1 15 0c0 .830-.670 1.500-1.500 1.500a.200.200 0 0 1-.200-.160c-.200-.960-.560-1.870-.880-2.540-.100-.230-.420-.150-.420.100v2.100a.500.500 0 0 1-.500.500h-8a.500.500 0 0 1-.500-.500v-2.100c0-.250-.310-.330-.420-.100-.320.670-.670 1.580-.880 2.540a.200.200 0 0 1-.200.160A1.500 1.500 0 0 1 2 20.500Z"/></svg>
<div class="abs" style="left:400px;top:578px;width:57px;height:32px;border-radius:8px;background:rgba(0,0,0,.6)"></div>
<div class="abs" style="left:412px;top:584.0px;font-size:16px;line-height:20px;color:#f2f3f5;font-weight:normal;letter-spacing:-0.9px;white-space:nowrap">Yung</div>
<div class="abs" style="left:536px;top:578px;width:32px;height:32px;border-radius:50%;background:rgba(0,0,0,.6)"></div><svg class="abs" style="left:542px;top:584.3px" width="20" height="20" viewBox="0 0 20 20"><ellipse cx="15.500" cy="11.300" rx="4.800" ry="6" fill="#7e90e6"/><ellipse cx="8" cy="15.600" rx="5.800" ry="3.700" fill="#7e90e6"/><ellipse cx="13" cy="15" rx="5" ry="3.800" fill="#8496ea"/><path d="M0 12 4 8.800 7 5.200 10 .9 12 2.500 14.700 1.900 16 4.200 16 7.800 14 10.800 11 12.800 7 13.800 5.500 15.600 4.200 14.800 5 12.800 2.500 12.900z" fill="#b5cf2e"/><path d="M10 .9 12 2.500 14.700 1.900 16 4.200 16 7.800 14 10.800 11 12.800 12.500 9 13.500 5z" fill="#9cc01f"/><path d="M6.800 6H10.200V8.800H9.400V10.800H7.200z" fill="#5a3ad8"/></svg>
<div class="abs" style="left:584px;top:506px;width:184px;height:112px;border-radius:8px;background:linear-gradient(180deg,#a9393d 0%,#a8383c 35%,#75282b 100%);"></div>
<div class="abs" style="left:636px;top:522px;width:80px;height:80px;border-radius:50%;overflow:hidden"><svg width="100%" height="100%" viewBox="0 0 80 80" style="display:block"><rect width="80" height="80" fill="#f5f0f0"/>
<path d="M6 22 22 14 28 52 10 60z" fill="#e8a0aa"/><path d="M10 28 24 22 27 48 13 54z" fill="#d84a5a"/><ellipse cx="14" cy="17" rx="9" ry="4" fill="#f0c8d0"/>
<path d="M20 6 30 10 26 18z" fill="#e03030"/><circle cx="6" cy="40" r="5" fill="#cc2828"/><circle cx="5" cy="52" r="4" fill="#cc2828"/>
<path d="M36 12Q52 2 70 14L66 20Q52 12 40 20z" fill="#e0808a"/><path d="M40 4 44 12 36 12z" fill="#d03030"/>
<path d="M36 22Q38 14 52 14T68 24L66 44Q60 52 50 52T36 42z" fill="#d82020"/><ellipse cx="48" cy="24" rx="6" ry="4" fill="#ee5a50"/>
<path d="M44 34Q52 42 62 32 58 46 50 44 45 42 44 34z" fill="#3a0808"/><path d="M47 39Q52 43 58 38 55 44 50 43z" fill="#fff"/>
<circle cx="47" cy="27" r="1.500" fill="#200"/><circle cx="57" cy="26" r="1.500" fill="#200"/>
<circle cx="26" cy="32" r="5.500" fill="#cc2424"/><path d="M30 32 38 34 37 40 30 37z" fill="#d02828"/>
<path d="M62 36 76 40 74 58 64 56z" fill="#e8c83a"/><circle cx="70" cy="62" r="6" fill="#c82424"/>
<path d="M34 46Q48 42 62 48L60 64 50 62 46 56 40 66 30 60z" fill="#2252b0"/>
<path d="M30 56 40 60 38 68 28 64z" fill="#b82020"/>
<path d="M16 58Q26 52 40 66L44 76Q30 80 20 70z" fill="#c8582a"/><path d="M18 58Q28 54 40 66L42 70Q30 62 17 62z" fill="#d8b040"/><path d="M38 62 48 70 44 77 38 70z" fill="#7a4aa0"/>
<path d="M56 62 64 64 62 74 54 72z" fill="#b82020"/></svg></div>
<div class="abs" style="left:592px;top:578px;width:65px;height:32px;border-radius:8px;background:rgba(0,0,0,.6)"></div>
<div class="abs" style="left:604px;top:584.0px;font-size:16px;line-height:20px;color:#f2f3f5;font-weight:normal;letter-spacing:-0.15px;white-space:nowrap">majifv</div>
<div class="abs" style="left:696px;top:582px;width:24px;height:24px;border-radius:50%;background:rgba(0,0,0,.6)"></div>
<svg class="abs" style="left:700px;top:586px" width="16" height="16" viewBox="0 0 24 24"><g fill="#d8d8d8"><path d="M12 3a9 9 0 0 0-8.950 10h1.870a5 5 0 0 1 4.100 2.130l1.370 1.970a3.100 3.100 0 0 1-.170 3.780 2.850 2.850 0 0 1-3.550.740 11 11 0 0 1-5.670-9.620 11 11 0 0 1 22 0c0 4.150-2.300 7.760-5.670 9.620a2.850 2.850 0 0 1-3.550-.740 3.100 3.100 0 0 1-.170-3.780l1.380-1.970a5 5 0 0 1 4.100-2.130h1.860A9 9 0 0 0 12 3Z"/></g><path d="M21 3 3 21" stroke="#3a1618" stroke-width="5"/><path d="M21.500 2.500 2.500 21.500" stroke="#d8d8d8" stroke-width="2" stroke-linecap="round"/></svg>
<div class="abs" style="left:728px;top:578px;width:32px;height:32px;border-radius:50%;background:rgba(0,0,0,.6)"></div><svg class="abs" style="left:734px;top:584.3px" width="20" height="20" viewBox="0 0 20 20"><ellipse cx="15.500" cy="11.300" rx="4.800" ry="6" fill="#7e90e6"/><ellipse cx="8" cy="15.600" rx="5.800" ry="3.700" fill="#7e90e6"/><ellipse cx="13" cy="15" rx="5" ry="3.800" fill="#8496ea"/><path d="M0 12 4 8.800 7 5.200 10 .9 12 2.500 14.700 1.900 16 4.200 16 7.800 14 10.800 11 12.800 7 13.800 5.500 15.600 4.200 14.800 5 12.800 2.500 12.900z" fill="#b5cf2e"/><path d="M10 .9 12 2.500 14.700 1.900 16 4.200 16 7.800 14 10.800 11 12.800 12.500 9 13.500 5z" fill="#9cc01f"/><path d="M6.800 6H10.200V8.800H9.400V10.800H7.200z" fill="#5a3ad8"/></svg>
<div class="abs" style="left:776px;top:506px;width:184px;height:112px;border-radius:8px;background:#000;border:2px solid #22a55b"></div>
<div class="abs" style="left:779px;top:509px;width:178px;height:106px;border-radius:6px;background:linear-gradient(180deg,#6c6d62 0%,#6b6c61 35%,#4a4b43 100%)"></div>
<div class="abs" style="left:828px;top:522px;width:80px;height:80px;border-radius:50%;overflow:hidden"><svg width="100%" height="100%" viewBox="0 0 80 80" style="display:block"><rect width="80" height="80" fill="#8a8c82"/><rect x="28" y="0" width="18" height="50" fill="#a8aaa0"/><rect x="46" y="0" width="34" height="80" fill="#4c5249"/>
<rect x="62" y="18" width="14" height="30" fill="#8a8c82" opacity=".6"/>
<path d="M16 6H22V26L26 28V50L22 56H17V34L6 36 4 30 16 27z" fill="#1a1c18"/><path d="M10 44 17 40 19 46 12 50z" fill="#1a1c18"/><path d="M22 52 26 66H22z" fill="#1a1c18"/><path d="M14 66 20 70 18 73 13 70z" fill="#1a1c18"/>
<path d="M36 22Q38 12 47 12T60 24L64 52 54 56 52 30 40 34z" fill="#3c2e26"/>
<path d="M38 24Q40 18 46 19L50 30Q48 38 44 38 39 36 38 30z" fill="#d0a898"/>
<path d="M26 48Q34 38 46 40 60 40 64 54L66 80H22z" fill="#e0e0d4"/><path d="M52 50 58 38 62 40 60 56z" fill="#d0a898"/><path d="M24 56 32 50 34 80H22z" fill="#c4c4b6"/><path d="M56 56 64 54 66 80H58z" fill="#c4c4b6"/></svg></div><div class="abs" style="left:828px;top:522px;width:80px;height:80px;border-radius:50%;background:rgba(96,97,88,.28)"></div>
<div class="abs" style="left:784px;top:578px;width:60px;height:32px;border-radius:8px;background:rgba(0,0,0,.6)"></div>
<div class="abs" style="left:796px;top:584.0px;font-size:16px;line-height:20px;color:#f2f3f5;font-weight:normal;letter-spacing:-0.1px;white-space:nowrap">villan</div>
<div class="abs" style="left:920px;top:578px;width:32px;height:32px;border-radius:50%;background:rgba(0,0,0,.6)"></div><svg class="abs" style="left:926px;top:584.3px" width="20" height="20" viewBox="0 0 20 20"><ellipse cx="15.500" cy="11.300" rx="4.800" ry="6" fill="#7e90e6"/><ellipse cx="8" cy="15.600" rx="5.800" ry="3.700" fill="#7e90e6"/><ellipse cx="13" cy="15" rx="5" ry="3.800" fill="#8496ea"/><path d="M0 12 4 8.800 7 5.200 10 .9 12 2.500 14.700 1.900 16 4.200 16 7.800 14 10.800 11 12.800 7 13.800 5.500 15.600 4.200 14.800 5 12.800 2.500 12.900z" fill="#b5cf2e"/><path d="M10 .9 12 2.500 14.700 1.900 16 4.200 16 7.800 14 10.800 11 12.800 12.500 9 13.500 5z" fill="#9cc01f"/><path d="M6.800 6H10.200V8.800H9.400V10.800H7.200z" fill="#5a3ad8"/></svg>
<svg class="abs" style="left:16px;top:642px" width="24" height="24" viewBox="0 0 24 24"><path fill="#b5bac1" d="M4.200 9.200 2 21Q1.900 22.100 3 21.900L14.800 20.500Q15.800 20.200 15.400 18z"/><ellipse cx="9.800" cy="13.600" rx="7.300" ry="3.500" transform="rotate(41 9.800 13.600)" fill="#000" stroke="#b5bac1" stroke-width="1.600"/><g stroke="#b5bac1" stroke-width="1.700" stroke-linecap="round" fill="none"><path d="M7.500 2.600 8.900 6.100M14 1.500 13 6.400M20.200 3.800 15.900 8.200M22.400 9.900 17.700 11.300M21.500 16.200 17.700 14.700"/></g></svg>
<svg class="abs" style="left:60px;top:642px" width="24" height="24" viewBox="0 0 24 24"><circle cx="12" cy="12" r="10.900" fill="#b5bac1"/><circle cx="6.600" cy="11.300" r="1.600" fill="#000"/><circle cx="17.500" cy="11.300" r="1.600" fill="#000"/><path d="M7.600 15.200Q12 19.200 16.500 15.200" fill="none" stroke="#000" stroke-width="1.800" stroke-linecap="round"/></svg>
<div class="abs" style="left:296.0px;top:626.0px;width:56px;height:56px;border-radius:50%;background:#18191c;"></div>
<div class="abs" style="left:368.0px;top:626.0px;width:56px;height:56px;border-radius:50%;background:#2b2d31;"></div>
<div class="abs" style="left:440.0px;top:626.0px;width:56px;height:56px;border-radius:50%;background:#2b2d31;"></div>
<div class="abs" style="left:512.0px;top:626.0px;width:56px;height:56px;border-radius:50%;background:#ffffff;"></div>
<div class="abs" style="left:584.0px;top:626.0px;width:56px;height:56px;border-radius:50%;background:#da373c;"></div>
<svg class="abs" style="left:312px;top:642px" width="24" height="24" viewBox="0 0 24 24"><g fill="#6d6f78"><path d="M4 4a3 3 0 0 0-3 3v10a3 3 0 0 0 3 3h11a3 3 0 0 0 3-3v-2.120a.500.500 0 0 1 .850-.360l3.290 3.300a.500.500 0 0 0 .860-.360V6.540a.500.500 0 0 0-.850-.350l-3.300 3.290a.500.500 0 0 1-.850-.360V7a3 3 0 0 0-3-3H4Z"/></g><path d="M21 3 3 21" stroke="#18191c" stroke-width="5"/><path d="M21.500 2.500 2.500 21.500" stroke="#6d6f78" stroke-width="2" stroke-linecap="round"/></svg>
<div class="abs" style="left:330.0px;top:660.5px;width:24px;height:24px;border-radius:50%;background:#000;"></div><div class="abs" style="left:332.0px;top:662.5px;width:20px;height:20px;border-radius:50%;background:#18191c;"></div>
<svg class="abs" style="left:336px;top:666.5px" width="12" height="12" viewBox="0 0 24 24"><path fill="#a0a3aa" d="M5.300 9.300a1 1 0 0 1 1.400 0l5.300 5.290 5.300-5.300a1 1 0 1 1 1.400 1.420l-6 6a1 1 0 0 1-1.400 0l-6-6a1 1 0 0 1 0-1.400Z"/></svg>
<svg class="abs" style="left:384px;top:642px" width="24" height="24" viewBox="0 0 24 24"><path fill="#f2f3f5" d="M20.500 2.500c.6 0 1 .4 1 1 0 4.500-1.800 8.700-5.200 11.500l-.3 4.200c0 .4-.3.800-.6 1l-3.400 1.900c-.7.400-1.500-.1-1.500-.9v-3.400L7.700 15H4.300c-.800 0-1.300-.800-.900-1.500l1.900-3.400c.2-.3.600-.6 1-.6l4.200-.3C13.300 4.300 16 2.500 20.500 2.500zM15.500 10.500a2 2 0 1 0 0-4 2 2 0 0 0 0 4zM3 21c0-2.200 1.300-4 3.300-4.500.5-.1 1 .4.900.9C6.700 19.500 5.200 21 3 21z"/></svg>
<div class="abs" style="left:406.0px;top:630.0px;width:16px;height:16px;border-radius:50%;background:#000;"></div><div class="abs" style="left:408.0px;top:632.0px;width:12px;height:12px;border-radius:50%;background:#fff;"></div>
<svg class="abs" style="left:456px;top:642px" width="24" height="24" viewBox="0 0 24 24"><path fill="#f2f3f5" d="M2 4.500A2.500 2.500 0 0 1 4.500 2h15A2.500 2.500 0 0 1 22 4.500v10a2.500 2.500 0 0 1-2.500 2.500H13v2.500h3.500a1 1 0 0 1 0 2h-9a1 1 0 0 1 0-2H11V17H4.500A2.500 2.500 0 0 1 2 14.500z"/><path d="M7.500 13c.3-3 2.300-5 5.500-5.200V5.500l4.500 4-4.500 4v-2.400c-2.200 0-3.800.5-5.500 1.900z" fill="#2b2d31"/></svg>
<svg class="abs" style="left:528px;top:642px" width="24" height="24" viewBox="0 0 24 24"><path fill="#1e1f22" d="M12 2a4 4 0 0 0-4 4v4a4 4 0 0 0 8 0V6a4 4 0 0 0-4-4Z"/><path fill="#1e1f22" d="M6 10a1 1 0 0 0-2 0 8 8 0 0 0 7 7.940V20H9a1 1 0 1 0 0 2h6a1 1 0 1 0 0-2h-2v-2.060A8 8 0 0 0 20 10a1 1 0 1 0-2 0 6 6 0 0 1-12 0Z"/></svg>
<div class="abs" style="left:545.5px;top:660.5px;width:24px;height:24px;border-radius:50%;background:#000;"></div><div class="abs" style="left:547.5px;top:662.5px;width:20px;height:20px;border-radius:50%;background:#fff;"></div>
<svg class="abs" style="left:551.5px;top:666.5px" width="12" height="12" viewBox="0 0 24 24"><path fill="#1e1f22" d="M5.300 9.300a1 1 0 0 1 1.400 0l5.300 5.290 5.300-5.300a1 1 0 1 1 1.400 1.420l-6 6a1 1 0 0 1-1.400 0l-6-6a1 1 0 0 1 0-1.400Z"/></svg>
<svg class="abs" style="left:600px;top:642px" width="24" height="24" viewBox="0 0 24 24"><path fill="#fff" d="M2 4.500A2.500 2.500 0 0 1 4.500 2h15A2.500 2.500 0 0 1 22 4.500v10a2.500 2.500 0 0 1-2.500 2.500H13v2.500h3.500a1 1 0 0 1 0 2h-9a1 1 0 0 1 0-2H11V17H4.500A2.500 2.500 0 0 1 2 14.500z"/><path d="M9 6.500l6 6M15 6.500l-6 6" stroke="#da373c" stroke-width="2" stroke-linecap="round"/></svg>
<svg class="abs" style="left:848px;top:642px" width="24" height="24" viewBox="0 0 24 24"><path fill="#b5bac1" d="M12 3a1 1 0 0 0-1-1h-.060a1 1 0 0 0-.740.320L5.920 7H3a1 1 0 0 0-1 1v8a1 1 0 0 0 1 1h2.920l4.280 4.680a1 1 0 0 0 .740.320H11a1 1 0 0 0 1-1V3Z"/><path d="M15.500 9l6 6M21.500 9l-6 6" stroke="#b5bac1" stroke-width="2" stroke-linecap="round"/></svg>
<svg class="abs" style="left:888px;top:642px" width="24" height="24" viewBox="0 0 24 24"><g fill="none" stroke="#b5bac1" stroke-width="2" stroke-linecap="round" stroke-linejoin="round"><path d="M10.500 3.500H5.500a2.500 2.500 0 0 0-2.500 2.500v12.500a2.500 2.500 0 0 0 2.500 2.500h12.500a2.500 2.500 0 0 0 2.500-2.500v-5.500"/><path d="M15.500 2.500h6v6M21.500 2.500l-7.500 7.500"/></g></svg>
<svg class="abs" style="left:928px;top:642px" width="24" height="24" viewBox="0 0 24 24"><g fill="none" stroke="#b5bac1" stroke-width="2" stroke-linecap="round" stroke-linejoin="round"><path d="M3 9V6a3 3 0 0 1 3-3h3M15 3h3a3 3 0 0 1 3 3v3M21 15v3a3 3 0 0 1-3 3h-3M9 21H6a3 3 0 0 1-3-3v-3"/></g></svg>
<!--/MAIN-->
</div>
</div>
<div id="tb">
<!--TASKBAR-->
<svg class="abs" style="left:16px;top:12px" width="16" height="16" viewBox="0 0 16 16"><path fill="#fff" d="M0 2.3 6.5 1.4V7.6H0zM7.3 1.3 16 0V7.6H7.3zM0 8.4H6.5V14.6L0 13.7zM7.3 8.4H16V16L7.3 14.7z"/></svg>
<div class="search"></div>
<svg class="abs" style="left:59px;top:11px" width="18" height="18" viewBox="0 0 18 18"><circle cx="11" cy="7" r="5" fill="none" stroke="#e6e6e6" stroke-width="1.3"/><path d="M7.4 10.6 1.5 16.5" stroke="#e6e6e6" stroke-width="1.4" stroke-linecap="round"/></svg>
<div class="t" style="left:88px;font-size:15px;line-height:41px;color:#dedede;letter-spacing:-.3px">Type here to search</div>
<svg class="abs" style="left:409px;top:10px" width="20" height="20" viewBox="0 0 20 20"><g fill="#fff"><circle cx="10" cy="10" r="6.6"/><g><rect x="8.3" y="0.6" width="3.4" height="4" rx=".4"/><rect x="8.3" y="15.4" width="3.4" height="4" rx=".4"/></g><g transform="rotate(45 10 10)"><rect x="8.3" y="0.6" width="3.4" height="4" rx=".4"/><rect x="8.3" y="15.4" width="3.4" height="4" rx=".4"/></g><g transform="rotate(90 10 10)"><rect x="8.3" y="0.6" width="3.4" height="4" rx=".4"/><rect x="8.3" y="15.4" width="3.4" height="4" rx=".4"/></g><g transform="rotate(135 10 10)"><rect x="8.3" y="0.6" width="3.4" height="4" rx=".4"/><rect x="8.3" y="15.4" width="3.4" height="4" rx=".4"/></g></g><circle cx="10" cy="10" r="4.1" fill="#101010"/><circle cx="10" cy="10" r="1.9" fill="none" stroke="#fff" stroke-width="0"/></svg>
<svg class="abs" style="left:454px;top:8px" width="24" height="24" viewBox="0 0 24 24"><rect x="4" y="2.5" width="18" height="13.5" rx="1" fill="#cfd6dd" transform="skewY(-6) translate(0 2)"/><rect x="5.5" y="4" width="15" height="10.5" fill="#eaf3fb" transform="skewY(-6) translate(0 2)"/><path d="M7 11 9 9.5 10.5 11.5 12.5 6.5 14 11 16 9 18.5 10.5" fill="none" stroke="#2f7fd0" stroke-width="1" transform="skewY(-6) translate(0 2)"/><rect x="1" y="5" width="3.2" height="12" fill="#9aa3ab"/><path d="M9 17h7l1.5 3.5h-10z" fill="#8b949c"/><ellipse cx="12.5" cy="21" rx="6" ry="1.8" fill="#b9c1c8"/></svg>
<div class="t" style="left:482px;letter-spacing:-.28px;line-height:40px">Task Manager</div><div class="ul" style="left:448px;width:152px"></div>
<svg class="abs" style="left:616px;top:9px" width="22" height="22" viewBox="0 0 22 22"><path d="M6.5 1h9v9H21L11 21 1 10h5.5z" fill="#2f93e8"/><path d="M6.5 1h9v3h-9z" fill="#54aef5"/></svg>
<div class="t" style="left:643px;line-height:40px">Downloads</div><div class="ul" style="left:609px;width:152px"></div>
<div class="abs" style="left:766px;top:0;width:160px;height:40px;background:#353535"></div><div class="ul" style="left:766px;width:160px;background:#86c3f2"></div>
<div class="abs" style="left:776px;top:8px;width:24px;height:24px;border-radius:50%;background:#5865f2"></div>
<svg class="abs" style="left:780px;top:13px" width="16" height="13" viewBox="0 0 16 13"><path fill="#fff" d="M13.5 1.6A12 12 0 0 0 10.3.6l-.4.8a11 11 0 0 0-3.800 0L5.700.6a12 12 0 0 0-3.200 1C.5 4.700-.1 7.700.2 10.600a12 12 0 0 0 3.900 2l.8-1.300a8 8 0 0 1-1.300-.6l.3-.3a8.800 8.800 0 0 0 8.200 0l.3.300c-.4.200-.8.500-1.300.6l.8 1.300a12 12 0 0 0 3.900-2c.4-3.400-.6-6.300-2.300-9zM5.400 8.800c-.8 0-1.400-.7-1.400-1.600s.6-1.600 1.400-1.600 1.400.7 1.400 1.600-.6 1.600-1.400 1.600zm5.200 0c-.8 0-1.400-.7-1.400-1.600s.6-1.600 1.400-1.600 1.400.7 1.400 1.600-.6 1.600-1.400 1.600z"/></svg>
<div class="abs" style="left:787px;top:19px;width:14px;height:14px;border-radius:50%;background:#ee4549;font-size:9px;font-weight:bold;line-height:14px;text-align:center;letter-spacing:-.6px">9+</div>
<div class="t" style="left:804px;letter-spacing:-.37px;line-height:40px">VC (1) | Bread Snatc...</div>
<svg class="abs" style="left:939px;top:8px" width="24" height="24" viewBox="0 0 24 24"><circle cx="12" cy="12" r="12" fill="#fff"/><path d="M12 12 1.610 6A12 12 0 0 1 22.390 6z" fill="#ea4335"/><path d="M12 12 22.390 6A12 12 0 0 1 12 24z" fill="#fbbc05"/><path d="M12 12 12 24A12 12 0 0 1 1.610 6z" fill="#34a853"/><path d="M12 6.500H22.100A12 12 0 0 0 1.610 6L6.800 14.800z" fill="#ea4335"/><path d="M16.800 14.800 12 24A12 12 0 0 0 22.390 6L12 6.500z" fill="#fbbc05"/><path d="M6.900 14.500 1.610 6A12 12 0 0 0 12 24L16.900 14.800z" fill="#34a853"/><circle cx="12" cy="12" r="5.600" fill="#fff"/><circle cx="12" cy="12" r="4.500" fill="#4285f4"/></svg>
<svg class="abs" style="left:1583px;top:15px" width="15" height="9" viewBox="0 0 15 9"><path d="M1 8 7.500 1.500 14 8" fill="none" stroke="#fff" stroke-width="1.300"/></svg>
<svg class="abs" style="left:1607px;top:11px" width="14" height="18" viewBox="0 0 14 18"><rect x="4" y="1" width="6" height="11" rx="2.500" fill="#fff"/><path d="M1.800 8.500a5.200 5.200 0 0 0 10.400 0M7 13.700V16.500M4.500 16.600h5" fill="none" stroke="#fff" stroke-width="1"/></svg>
<svg class="abs" style="left:1630px;top:11px" width="20" height="18" viewBox="0 0 20 18"><path d="M1.500 6.500h3l3.500-3.500v12l-3.500-3.500h-3z" fill="none" stroke="#fff" stroke-width="1"/><path d="M10.500 6.500a3.500 3.500 0 0 1 0 5M12.800 4.300a6.500 6.500 0 0 1 0 9.400M15.100 2.200a9.500 9.500 0 0 1 0 13.600" fill="none" stroke="#fff" stroke-width="1"/></svg>
<div class="t" style="left:1643px;width:80px;text-align:center;line-height:14px;top:4px;letter-spacing:-.4px">7:35 PM</div>
<div class="t" style="left:1643px;width:80px;text-align:center;line-height:14px;top:22px;letter-spacing:-.15px">6/10/2024</div>
<div class="abs" style="left:1715px;top:0;width:1px;height:40px;background:#4a4a4a"></div>

<!--/TASKBAR-->
</div>
</body>
</html>
